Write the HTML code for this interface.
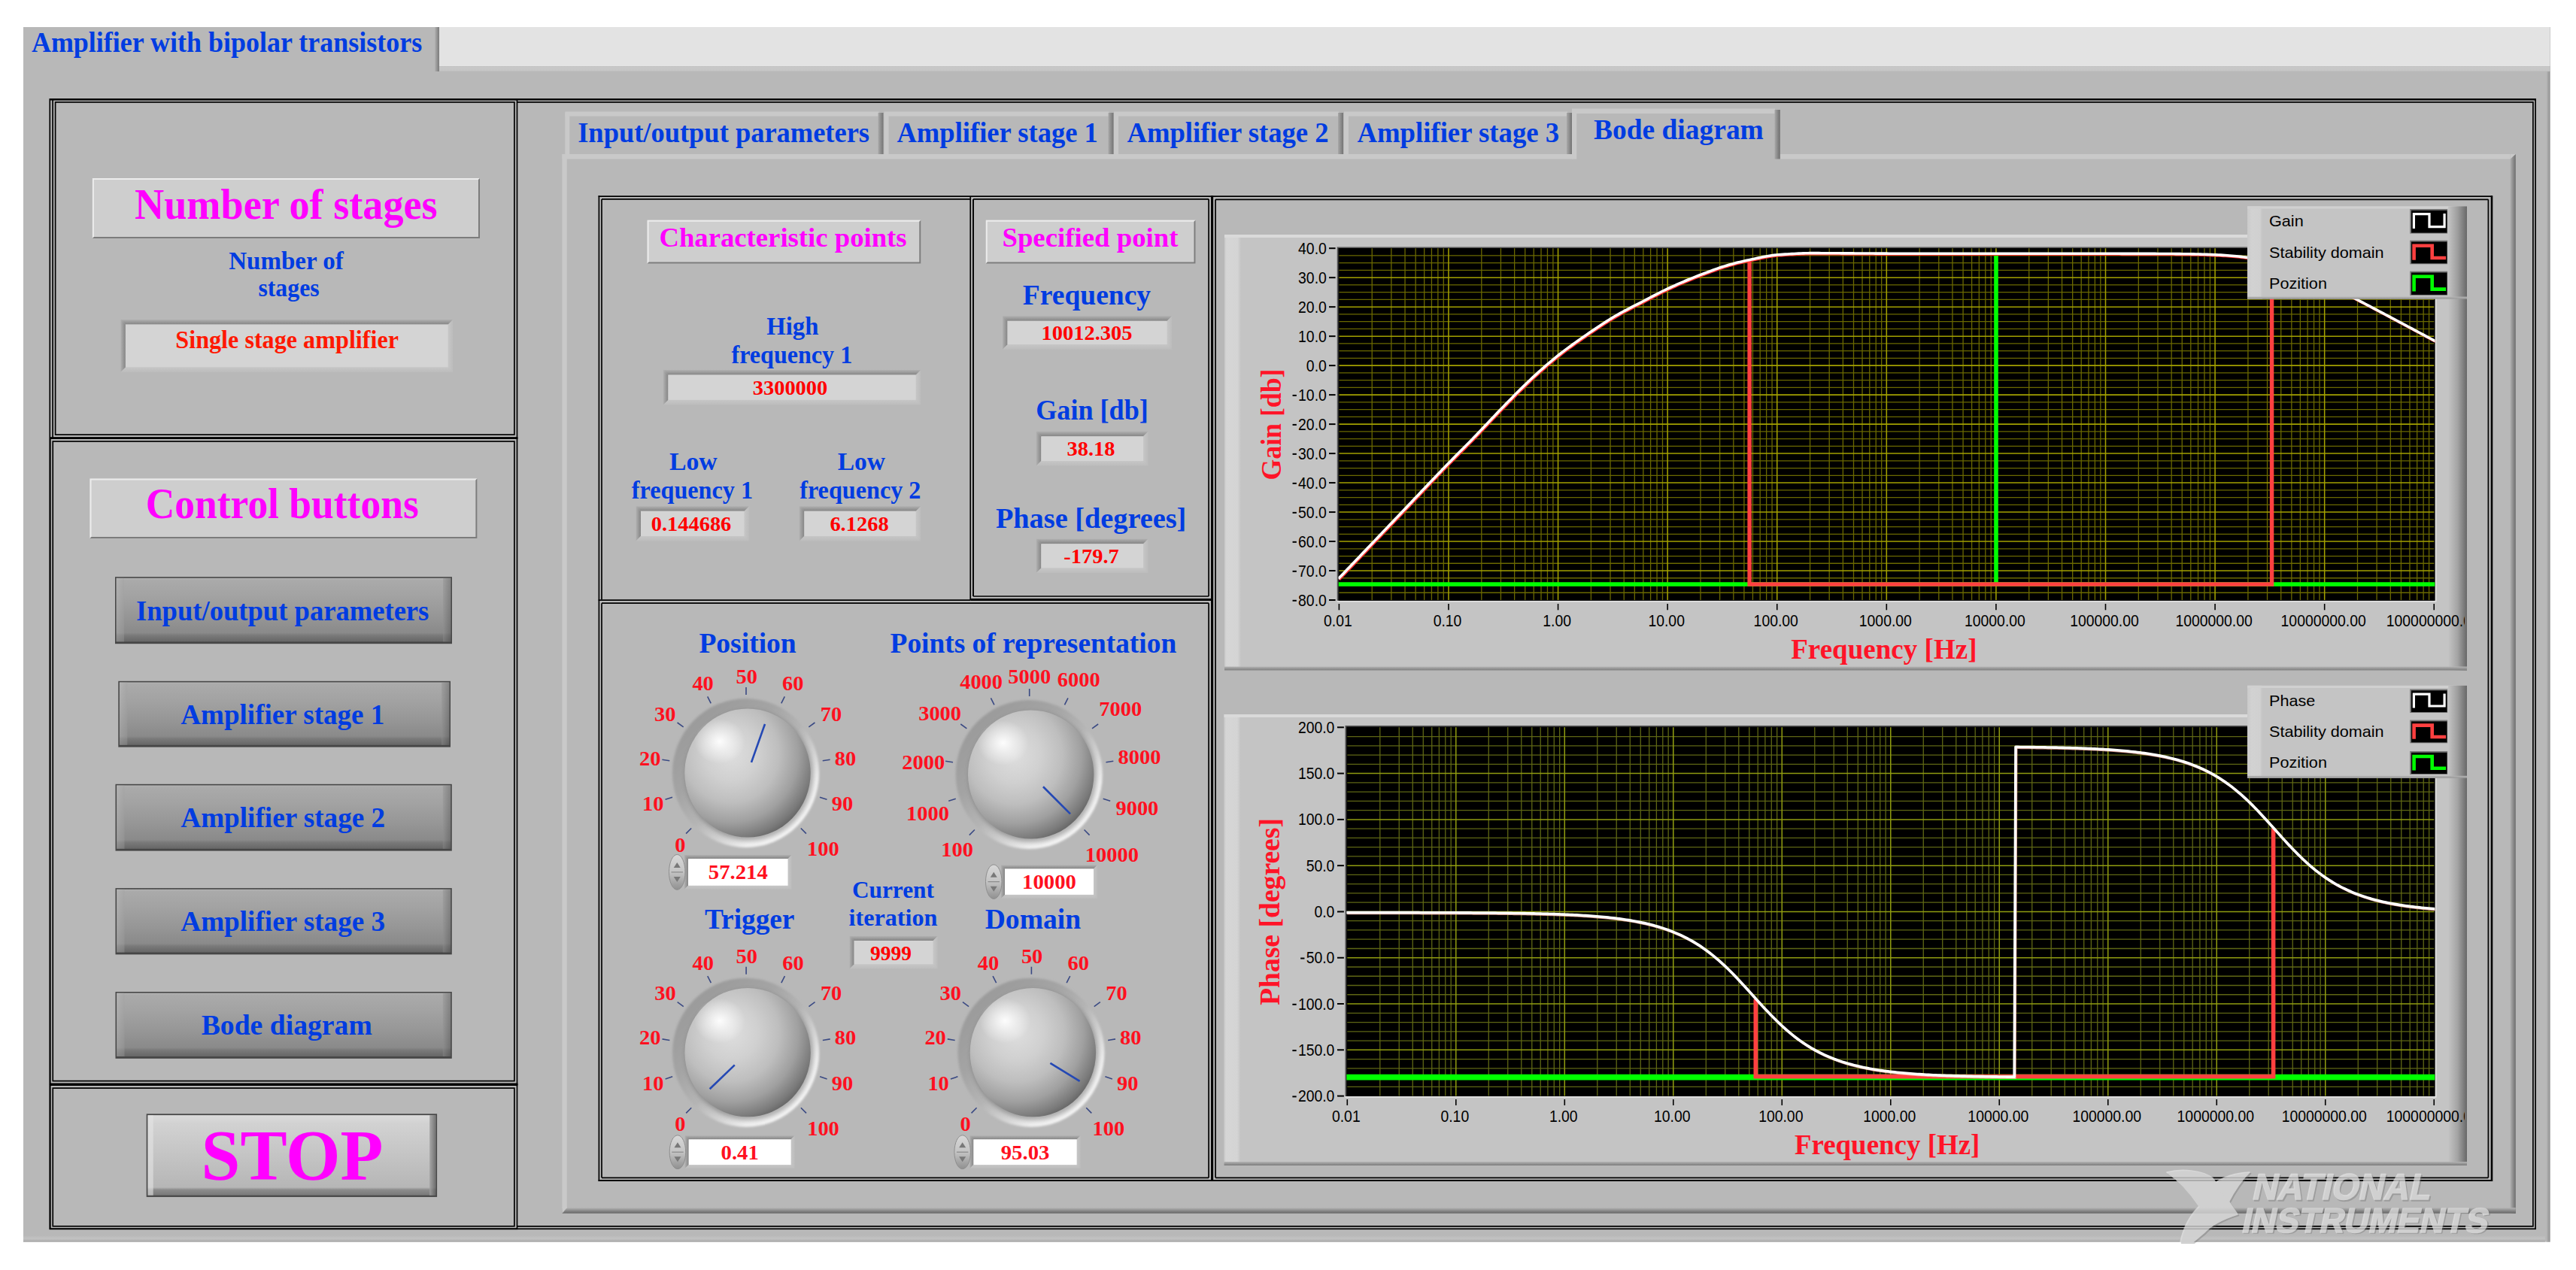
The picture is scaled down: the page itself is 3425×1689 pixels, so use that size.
<!DOCTYPE html>
<html><head><meta charset="utf-8"><title>Amplifier with bipolar transistors</title>
<style>html,body{margin:0;padding:0;background:#fff;}svg{display:block}text{white-space:pre}</style></head>
<body><svg width="3425" height="1689" viewBox="0 0 3425 1689">
<defs><linearGradient id="g1" x1="0" y1="0" x2="1" y2="0"><stop offset="0" stop-color="#b8b8b8"/><stop offset="1" stop-color="#909090"/></linearGradient><linearGradient id="g2" x1="0" y1="0" x2="0" y2="1"><stop offset="0" stop-color="#b8b8b8"/><stop offset="0.5" stop-color="#c2c2c2"/><stop offset="1" stop-color="#a8a8a8"/></linearGradient><linearGradient id="g3" x1="0" y1="0" x2="0" y2="1"><stop offset="0" stop-color="#bebebe"/><stop offset="0.2" stop-color="#c8c8c8"/><stop offset="0.8" stop-color="#c6c6c6"/><stop offset="1" stop-color="#bababa"/></linearGradient><linearGradient id="g4" x1="0" y1="0" x2="1" y2="0"><stop offset="0" stop-color="#b8b8b8"/><stop offset="0.6" stop-color="#909090"/><stop offset="1" stop-color="#7c7c7c"/></linearGradient><linearGradient id="g5" x1="0" y1="0" x2="0" y2="1"><stop offset="0" stop-color="#b0b0b0"/><stop offset="1" stop-color="#858585"/></linearGradient><linearGradient id="g6" x1="0" y1="0" x2="1" y2="0"><stop offset="0" stop-color="#b0b0b0"/><stop offset="1" stop-color="#858585"/></linearGradient><linearGradient id="g7" x1="0" y1="0" x2="0" y2="1"><stop offset="0" stop-color="#c6c6c6"/><stop offset="1" stop-color="#bcbcbc"/></linearGradient><linearGradient id="g8" x1="0" y1="0" x2="1" y2="0"><stop offset="0" stop-color="#c6c6c6"/><stop offset="1" stop-color="#bcbcbc"/></linearGradient><linearGradient id="g9" x1="0" y1="0" x2="0" y2="1"><stop offset="0" stop-color="#b2b2b2"/><stop offset="0.035" stop-color="#aaaaaa"/><stop offset="0.3" stop-color="#a2a2a2"/><stop offset="0.6" stop-color="#969696"/><stop offset="0.86" stop-color="#8a8a8a"/><stop offset="0.9" stop-color="#7a7a7a"/><stop offset="1" stop-color="#666666"/></linearGradient><linearGradient id="g10" x1="0" y1="0" x2="1" y2="0"><stop offset="0" stop-color="#c0c0c0"/><stop offset="1" stop-color="#a0a0a0"/></linearGradient><linearGradient id="g11" x1="0" y1="0" x2="1" y2="0"><stop offset="0" stop-color="#909090"/><stop offset="1" stop-color="#4a4a4a"/></linearGradient><linearGradient id="g12" x1="0" y1="0" x2="0" y2="1"><stop offset="0" stop-color="#b2b2b2"/><stop offset="0.035" stop-color="#aaaaaa"/><stop offset="0.3" stop-color="#a2a2a2"/><stop offset="0.6" stop-color="#969696"/><stop offset="0.86" stop-color="#8a8a8a"/><stop offset="0.9" stop-color="#7a7a7a"/><stop offset="1" stop-color="#666666"/></linearGradient><linearGradient id="g13" x1="0" y1="0" x2="1" y2="0"><stop offset="0" stop-color="#c0c0c0"/><stop offset="1" stop-color="#a0a0a0"/></linearGradient><linearGradient id="g14" x1="0" y1="0" x2="1" y2="0"><stop offset="0" stop-color="#909090"/><stop offset="1" stop-color="#4a4a4a"/></linearGradient><linearGradient id="g15" x1="0" y1="0" x2="0" y2="1"><stop offset="0" stop-color="#b2b2b2"/><stop offset="0.035" stop-color="#aaaaaa"/><stop offset="0.3" stop-color="#a2a2a2"/><stop offset="0.6" stop-color="#969696"/><stop offset="0.86" stop-color="#8a8a8a"/><stop offset="0.9" stop-color="#7a7a7a"/><stop offset="1" stop-color="#666666"/></linearGradient><linearGradient id="g16" x1="0" y1="0" x2="1" y2="0"><stop offset="0" stop-color="#c0c0c0"/><stop offset="1" stop-color="#a0a0a0"/></linearGradient><linearGradient id="g17" x1="0" y1="0" x2="1" y2="0"><stop offset="0" stop-color="#909090"/><stop offset="1" stop-color="#4a4a4a"/></linearGradient><linearGradient id="g18" x1="0" y1="0" x2="0" y2="1"><stop offset="0" stop-color="#b2b2b2"/><stop offset="0.035" stop-color="#aaaaaa"/><stop offset="0.3" stop-color="#a2a2a2"/><stop offset="0.6" stop-color="#969696"/><stop offset="0.86" stop-color="#8a8a8a"/><stop offset="0.9" stop-color="#7a7a7a"/><stop offset="1" stop-color="#666666"/></linearGradient><linearGradient id="g19" x1="0" y1="0" x2="1" y2="0"><stop offset="0" stop-color="#c0c0c0"/><stop offset="1" stop-color="#a0a0a0"/></linearGradient><linearGradient id="g20" x1="0" y1="0" x2="1" y2="0"><stop offset="0" stop-color="#909090"/><stop offset="1" stop-color="#4a4a4a"/></linearGradient><linearGradient id="g21" x1="0" y1="0" x2="0" y2="1"><stop offset="0" stop-color="#b2b2b2"/><stop offset="0.035" stop-color="#aaaaaa"/><stop offset="0.3" stop-color="#a2a2a2"/><stop offset="0.6" stop-color="#969696"/><stop offset="0.86" stop-color="#8a8a8a"/><stop offset="0.9" stop-color="#7a7a7a"/><stop offset="1" stop-color="#666666"/></linearGradient><linearGradient id="g22" x1="0" y1="0" x2="1" y2="0"><stop offset="0" stop-color="#c0c0c0"/><stop offset="1" stop-color="#a0a0a0"/></linearGradient><linearGradient id="g23" x1="0" y1="0" x2="1" y2="0"><stop offset="0" stop-color="#909090"/><stop offset="1" stop-color="#4a4a4a"/></linearGradient><linearGradient id="g24" x1="0" y1="0" x2="0" y2="1"><stop offset="0" stop-color="#dcdcdc"/><stop offset="0.1" stop-color="#d2d2d2"/><stop offset="0.5" stop-color="#c4c4c4"/><stop offset="0.9" stop-color="#b6b6b6"/><stop offset="0.93" stop-color="#8c8c8c"/><stop offset="1" stop-color="#787878"/></linearGradient><linearGradient id="g25" x1="0" y1="0" x2="1" y2="0"><stop offset="0" stop-color="#a0a0a0"/><stop offset="1" stop-color="#5c5c5c"/></linearGradient><linearGradient id="g26" x1="0" y1="0" x2="1" y2="0"><stop offset="0" stop-color="#b0b0b0"/><stop offset="1" stop-color="#6e6e6e"/></linearGradient><linearGradient id="g27" x1="0" y1="0" x2="0" y2="1"><stop offset="0" stop-color="#b4b4b4"/><stop offset="0.75" stop-color="#787878"/><stop offset="1" stop-color="#666666"/></linearGradient><linearGradient id="g28" x1="0" y1="0" x2="1" y2="0"><stop offset="0" stop-color="#a8a8a8"/><stop offset="1" stop-color="#747474"/></linearGradient><linearGradient id="g29" x1="0" y1="0" x2="1" y2="0"><stop offset="0" stop-color="#a8a8a8"/><stop offset="1" stop-color="#747474"/></linearGradient><linearGradient id="g30" x1="0" y1="0" x2="1" y2="0"><stop offset="0" stop-color="#a8a8a8"/><stop offset="1" stop-color="#747474"/></linearGradient><linearGradient id="g31" x1="0" y1="0" x2="1" y2="0"><stop offset="0" stop-color="#a8a8a8"/><stop offset="1" stop-color="#747474"/></linearGradient><linearGradient id="g32" x1="0" y1="0" x2="1" y2="0"><stop offset="0" stop-color="#a8a8a8"/><stop offset="1" stop-color="#6e6e6e"/></linearGradient><linearGradient id="g33" x1="0" y1="0" x2="0" y2="1"><stop offset="0" stop-color="#b0b0b0"/><stop offset="1" stop-color="#858585"/></linearGradient><linearGradient id="g34" x1="0" y1="0" x2="1" y2="0"><stop offset="0" stop-color="#b0b0b0"/><stop offset="1" stop-color="#858585"/></linearGradient><linearGradient id="g35" x1="0" y1="0" x2="0" y2="1"><stop offset="0" stop-color="#c6c6c6"/><stop offset="1" stop-color="#bcbcbc"/></linearGradient><linearGradient id="g36" x1="0" y1="0" x2="1" y2="0"><stop offset="0" stop-color="#c6c6c6"/><stop offset="1" stop-color="#bcbcbc"/></linearGradient><linearGradient id="g37" x1="0" y1="0" x2="0" y2="1"><stop offset="0" stop-color="#b0b0b0"/><stop offset="1" stop-color="#858585"/></linearGradient><linearGradient id="g38" x1="0" y1="0" x2="1" y2="0"><stop offset="0" stop-color="#b0b0b0"/><stop offset="1" stop-color="#858585"/></linearGradient><linearGradient id="g39" x1="0" y1="0" x2="0" y2="1"><stop offset="0" stop-color="#c6c6c6"/><stop offset="1" stop-color="#bcbcbc"/></linearGradient><linearGradient id="g40" x1="0" y1="0" x2="1" y2="0"><stop offset="0" stop-color="#c6c6c6"/><stop offset="1" stop-color="#bcbcbc"/></linearGradient><linearGradient id="g41" x1="0" y1="0" x2="0" y2="1"><stop offset="0" stop-color="#b0b0b0"/><stop offset="1" stop-color="#858585"/></linearGradient><linearGradient id="g42" x1="0" y1="0" x2="1" y2="0"><stop offset="0" stop-color="#b0b0b0"/><stop offset="1" stop-color="#858585"/></linearGradient><linearGradient id="g43" x1="0" y1="0" x2="0" y2="1"><stop offset="0" stop-color="#c6c6c6"/><stop offset="1" stop-color="#bcbcbc"/></linearGradient><linearGradient id="g44" x1="0" y1="0" x2="1" y2="0"><stop offset="0" stop-color="#c6c6c6"/><stop offset="1" stop-color="#bcbcbc"/></linearGradient><linearGradient id="g45" x1="0" y1="0" x2="0" y2="1"><stop offset="0" stop-color="#b0b0b0"/><stop offset="1" stop-color="#858585"/></linearGradient><linearGradient id="g46" x1="0" y1="0" x2="1" y2="0"><stop offset="0" stop-color="#b0b0b0"/><stop offset="1" stop-color="#858585"/></linearGradient><linearGradient id="g47" x1="0" y1="0" x2="0" y2="1"><stop offset="0" stop-color="#c6c6c6"/><stop offset="1" stop-color="#bcbcbc"/></linearGradient><linearGradient id="g48" x1="0" y1="0" x2="1" y2="0"><stop offset="0" stop-color="#c6c6c6"/><stop offset="1" stop-color="#bcbcbc"/></linearGradient><linearGradient id="g49" x1="0" y1="0" x2="0" y2="1"><stop offset="0" stop-color="#b0b0b0"/><stop offset="1" stop-color="#858585"/></linearGradient><linearGradient id="g50" x1="0" y1="0" x2="1" y2="0"><stop offset="0" stop-color="#b0b0b0"/><stop offset="1" stop-color="#858585"/></linearGradient><linearGradient id="g51" x1="0" y1="0" x2="0" y2="1"><stop offset="0" stop-color="#c6c6c6"/><stop offset="1" stop-color="#bcbcbc"/></linearGradient><linearGradient id="g52" x1="0" y1="0" x2="1" y2="0"><stop offset="0" stop-color="#c6c6c6"/><stop offset="1" stop-color="#bcbcbc"/></linearGradient><linearGradient id="g53" x1="0" y1="0" x2="0" y2="1"><stop offset="0" stop-color="#b0b0b0"/><stop offset="1" stop-color="#858585"/></linearGradient><linearGradient id="g54" x1="0" y1="0" x2="1" y2="0"><stop offset="0" stop-color="#b0b0b0"/><stop offset="1" stop-color="#858585"/></linearGradient><linearGradient id="g55" x1="0" y1="0" x2="0" y2="1"><stop offset="0" stop-color="#c6c6c6"/><stop offset="1" stop-color="#bcbcbc"/></linearGradient><linearGradient id="g56" x1="0" y1="0" x2="1" y2="0"><stop offset="0" stop-color="#c6c6c6"/><stop offset="1" stop-color="#bcbcbc"/></linearGradient><linearGradient id="g57" x1="0" y1="0" x2="0" y2="1"><stop offset="0" stop-color="#b0b0b0"/><stop offset="1" stop-color="#858585"/></linearGradient><linearGradient id="g58" x1="0" y1="0" x2="1" y2="0"><stop offset="0" stop-color="#b0b0b0"/><stop offset="1" stop-color="#858585"/></linearGradient><linearGradient id="g59" x1="0" y1="0" x2="0" y2="1"><stop offset="0" stop-color="#c6c6c6"/><stop offset="1" stop-color="#bcbcbc"/></linearGradient><linearGradient id="g60" x1="0" y1="0" x2="1" y2="0"><stop offset="0" stop-color="#c6c6c6"/><stop offset="1" stop-color="#bcbcbc"/></linearGradient><filter id="blur1" x="-10%" y="-10%" width="120%" height="120%"><feGaussianBlur stdDeviation="1.6"/></filter><filter id="blur3" x="-20%" y="-20%" width="140%" height="140%"><feGaussianBlur stdDeviation="3"/></filter><linearGradient id="g61" x1="0.15" y1="0.12" x2="0.85" y2="0.88"><stop offset="0" stop-color="#9a9a9a"/><stop offset="0.3" stop-color="#a4a4a4"/><stop offset="0.52" stop-color="#b4b4b4"/><stop offset="0.7" stop-color="#d2d2d2"/><stop offset="0.85" stop-color="#f0f0f0"/><stop offset="1" stop-color="#fafafa"/></linearGradient><radialGradient id="g62" cx="0.37" cy="0.35" r="0.76"><stop offset="0" stop-color="#dedede"/><stop offset="0.28" stop-color="#d0d0d0"/><stop offset="0.5" stop-color="#bebebe"/><stop offset="0.7" stop-color="#a0a0a0"/><stop offset="0.86" stop-color="#7a7a7a"/><stop offset="1" stop-color="#4e4e4e"/></radialGradient><radialGradient id="g63" cx="0.5" cy="0.5" r="0.5"><stop offset="0" stop-color="#ffffff"/><stop offset="0.4" stop-color="#f4f4f4"/><stop offset="1" stop-color="#e0e0e0"/></radialGradient><radialGradient id="hl"><stop offset="0" stop-color="#fff" stop-opacity="0.95"/><stop offset="0.45" stop-color="#fff" stop-opacity="0.5"/><stop offset="1" stop-color="#fff" stop-opacity="0"/></radialGradient><linearGradient id="g64" x1="0" y1="0" x2="0" y2="1"><stop offset="0" stop-color="#b0b0b0"/><stop offset="1" stop-color="#858585"/></linearGradient><linearGradient id="g65" x1="0" y1="0" x2="1" y2="0"><stop offset="0" stop-color="#b0b0b0"/><stop offset="1" stop-color="#858585"/></linearGradient><linearGradient id="g66" x1="0" y1="0" x2="0" y2="1"><stop offset="0" stop-color="#c6c6c6"/><stop offset="1" stop-color="#bcbcbc"/></linearGradient><linearGradient id="g67" x1="0" y1="0" x2="1" y2="0"><stop offset="0" stop-color="#c6c6c6"/><stop offset="1" stop-color="#bcbcbc"/></linearGradient><linearGradient id="g68" x1="0" y1="0" x2="0" y2="1"><stop offset="0" stop-color="#d8d8d8"/><stop offset="0.5" stop-color="#c4c4c4"/><stop offset="1" stop-color="#909090"/></linearGradient><linearGradient id="g69" x1="0" y1="0" x2="0" y2="1"><stop offset="0" stop-color="#b0b0b0"/><stop offset="1" stop-color="#858585"/></linearGradient><linearGradient id="g70" x1="0" y1="0" x2="1" y2="0"><stop offset="0" stop-color="#b0b0b0"/><stop offset="1" stop-color="#858585"/></linearGradient><linearGradient id="g71" x1="0" y1="0" x2="0" y2="1"><stop offset="0" stop-color="#c6c6c6"/><stop offset="1" stop-color="#bcbcbc"/></linearGradient><linearGradient id="g72" x1="0" y1="0" x2="1" y2="0"><stop offset="0" stop-color="#c6c6c6"/><stop offset="1" stop-color="#bcbcbc"/></linearGradient><linearGradient id="g73" x1="0" y1="0" x2="0" y2="1"><stop offset="0" stop-color="#d8d8d8"/><stop offset="0.5" stop-color="#c4c4c4"/><stop offset="1" stop-color="#909090"/></linearGradient><linearGradient id="g74" x1="0" y1="0" x2="0" y2="1"><stop offset="0" stop-color="#b0b0b0"/><stop offset="1" stop-color="#858585"/></linearGradient><linearGradient id="g75" x1="0" y1="0" x2="1" y2="0"><stop offset="0" stop-color="#b0b0b0"/><stop offset="1" stop-color="#858585"/></linearGradient><linearGradient id="g76" x1="0" y1="0" x2="0" y2="1"><stop offset="0" stop-color="#c6c6c6"/><stop offset="1" stop-color="#bcbcbc"/></linearGradient><linearGradient id="g77" x1="0" y1="0" x2="1" y2="0"><stop offset="0" stop-color="#c6c6c6"/><stop offset="1" stop-color="#bcbcbc"/></linearGradient><linearGradient id="g78" x1="0" y1="0" x2="0" y2="1"><stop offset="0" stop-color="#d8d8d8"/><stop offset="0.5" stop-color="#c4c4c4"/><stop offset="1" stop-color="#909090"/></linearGradient><linearGradient id="g79" x1="0" y1="0" x2="0" y2="1"><stop offset="0" stop-color="#b0b0b0"/><stop offset="1" stop-color="#858585"/></linearGradient><linearGradient id="g80" x1="0" y1="0" x2="1" y2="0"><stop offset="0" stop-color="#b0b0b0"/><stop offset="1" stop-color="#858585"/></linearGradient><linearGradient id="g81" x1="0" y1="0" x2="0" y2="1"><stop offset="0" stop-color="#c6c6c6"/><stop offset="1" stop-color="#bcbcbc"/></linearGradient><linearGradient id="g82" x1="0" y1="0" x2="1" y2="0"><stop offset="0" stop-color="#c6c6c6"/><stop offset="1" stop-color="#bcbcbc"/></linearGradient><linearGradient id="g83" x1="0" y1="0" x2="0" y2="1"><stop offset="0" stop-color="#d8d8d8"/><stop offset="0.5" stop-color="#c4c4c4"/><stop offset="1" stop-color="#909090"/></linearGradient><linearGradient id="g84" x1="0" y1="0" x2="1" y2="0"><stop offset="0" stop-color="#c8c8c8"/><stop offset="0.12" stop-color="#d6d6d6"/><stop offset="0.8" stop-color="#d4d4d4"/><stop offset="1" stop-color="#c4c4c4"/></linearGradient><linearGradient id="g85" x1="0" y1="0" x2="1" y2="0"><stop offset="0" stop-color="#c4c4c4"/><stop offset="0.5" stop-color="#a4a4a4"/><stop offset="1" stop-color="#686868"/></linearGradient><linearGradient id="g86" x1="0" y1="0" x2="0" y2="1"><stop offset="0" stop-color="#b4b4b4"/><stop offset="1" stop-color="#7c7c7c"/></linearGradient><clipPath id="c87"><rect x="1779.5" y="330.0" width="1458.0" height="468.79999999999995"/></clipPath><clipPath id="c88"><rect x="1600" y="803.1" width="1677" height="50"/></clipPath><linearGradient id="g89" x1="0" y1="0" x2="1" y2="0"><stop offset="0" stop-color="#cacaca"/><stop offset="0.3" stop-color="#d2d2d2"/><stop offset="0.85" stop-color="#d0d0d0"/><stop offset="1" stop-color="#c4c4c4"/></linearGradient><linearGradient id="g90" x1="0" y1="0" x2="1" y2="0"><stop offset="0" stop-color="#c4c4c4"/><stop offset="0.5" stop-color="#9e9e9e"/><stop offset="1" stop-color="#686868"/></linearGradient><linearGradient id="g91" x1="0" y1="0" x2="0" y2="1"><stop offset="0" stop-color="#b4b4b4"/><stop offset="1" stop-color="#989898"/></linearGradient><linearGradient id="g92" x1="0" y1="0" x2="1" y2="0"><stop offset="0" stop-color="#c8c8c8"/><stop offset="0.12" stop-color="#d6d6d6"/><stop offset="0.8" stop-color="#d4d4d4"/><stop offset="1" stop-color="#c4c4c4"/></linearGradient><linearGradient id="g93" x1="0" y1="0" x2="1" y2="0"><stop offset="0" stop-color="#c4c4c4"/><stop offset="0.5" stop-color="#a4a4a4"/><stop offset="1" stop-color="#686868"/></linearGradient><linearGradient id="g94" x1="0" y1="0" x2="0" y2="1"><stop offset="0" stop-color="#b4b4b4"/><stop offset="1" stop-color="#7c7c7c"/></linearGradient><clipPath id="c95"><rect x="1790.2" y="966.5" width="1447.3" height="491.5"/></clipPath><clipPath id="c96"><rect x="1600" y="1461.9" width="1677" height="50"/></clipPath><linearGradient id="g97" x1="0" y1="0" x2="1" y2="0"><stop offset="0" stop-color="#cacaca"/><stop offset="0.3" stop-color="#d2d2d2"/><stop offset="0.85" stop-color="#d0d0d0"/><stop offset="1" stop-color="#c4c4c4"/></linearGradient><linearGradient id="g98" x1="0" y1="0" x2="1" y2="0"><stop offset="0" stop-color="#c4c4c4"/><stop offset="0.5" stop-color="#9e9e9e"/><stop offset="1" stop-color="#686868"/></linearGradient><linearGradient id="g99" x1="0" y1="0" x2="0" y2="1"><stop offset="0" stop-color="#b4b4b4"/><stop offset="1" stop-color="#989898"/></linearGradient></defs>
<rect width="3425" height="1689" fill="#fff"/>
<rect x="31" y="36" width="3359.5" height="1615.6" fill="#b8b8b8" />
<rect x="3385.5" y="36" width="5" height="1615.6" fill="url(#g1)" />
<rect x="31" y="1643" width="3353" height="8.6" fill="url(#g2)" />
<rect x="584" y="36" width="2806.5" height="52" fill="#e3e3e3" />
<rect x="584" y="88" width="2806.5" height="7.2" fill="url(#g3)" />
<rect x="577.5" y="36" width="6.5" height="59" fill="url(#g4)" />
<text x="41.93" y="68.75" font-family="Liberation Serif, serif" font-weight="bold" font-size="38.17" fill="#003ce1" textLength="519.22" lengthAdjust="spacingAndGlyphs" >Amplifier with bipolar transistors</text>
<rect x="66.3" y="131.9" width="3304.8" height="1502.4" fill="none" stroke="#000" stroke-width="1.7"/>
<line x1="66.3" y1="132.3" x2="3371.1" y2="132.3" stroke="#000" stroke-width="2.2" />
<rect x="70.1" y="132.3" width="617.4" height="450.3" fill="none" stroke="#000" stroke-width="1.7"/>
<rect x="73.6" y="135.9" width="610.3" height="442.2" fill="none" stroke="#000" stroke-width="1.7"/>
<rect x="66.75" y="582.6" width="620.75" height="859.6" fill="none" stroke="#000" stroke-width="1.7"/>
<rect x="70.25" y="587" width="613.65" height="850.6" fill="none" stroke="#000" stroke-width="1.7"/>
<rect x="66.75" y="1442.2" width="620.75" height="192.1" fill="none" stroke="#000" stroke-width="1.7"/>
<rect x="70.25" y="1447.1" width="613.65" height="183.7" fill="none" stroke="#000" stroke-width="1.7"/>
<line x1="66" y1="582.6" x2="688.3" y2="582.6" stroke="#000" stroke-width="2.8" />
<line x1="66" y1="1442.2" x2="688.3" y2="1442.2" stroke="#000" stroke-width="3.6" />
<polyline points="687.5,135.9 3367.9,135.9 3367.9,1630.8 687.5,1630.8" fill="none" stroke="#000" stroke-width="1.7"/>
<rect x="122.9" y="237" width="515.1" height="80" fill="#cecece" />
<polygon points="122.9,237 638,237 636,239 124.9,239 124.9,315 122.9,317" fill="#ececec" />
<polygon points="638,317 122.9,317 124.9,315 636,315 636,239 638,237" fill="#7c7c7c" />
<text x="179.03" y="290.6" font-family="Liberation Serif, serif" font-weight="bold" font-size="57.71" fill="#ff00ff" textLength="402.7" lengthAdjust="spacingAndGlyphs" >Number of stages</text>
<text x="304.19" y="357.6" font-family="Liberation Serif, serif" font-weight="bold" font-size="33.89" fill="#003ce1" textLength="152.63" lengthAdjust="spacingAndGlyphs" >Number of</text>
<text x="343.39" y="393.5" font-family="Liberation Serif, serif" font-weight="bold" font-size="33.89" fill="#003ce1" textLength="81.33" lengthAdjust="spacingAndGlyphs" >stages</text>
<polygon points="160.4,425 602.3,425 595.8,431.5 166.9,431.5" fill="url(#g5)" />
<polygon points="160.4,425 166.9,431.5 166.9,488.5 160.4,495" fill="url(#g6)" />
<polygon points="160.4,495 166.9,488.5 595.8,488.5 602.3,495" fill="url(#g7)" />
<polygon points="602.3,425 602.3,495 595.8,488.5 595.8,431.5" fill="url(#g8)" />
<rect x="166.9" y="431.5" width="428.9" height="57" fill="#d4d4d4" />
<text x="233.3" y="462.9" font-family="Liberation Serif, serif" font-weight="bold" font-size="33.28" fill="#ff1800" textLength="296.7" lengthAdjust="spacingAndGlyphs" >Single stage amplifier</text>
<rect x="119.5" y="636.5" width="514.9" height="79.4" fill="#cecece" />
<polygon points="119.5,636.5 634.4,636.5 632.4,638.5 121.5,638.5 121.5,713.9 119.5,715.9" fill="#ececec" />
<polygon points="634.4,715.9 119.5,715.9 121.5,713.9 632.4,713.9 632.4,638.5 634.4,636.5" fill="#7c7c7c" />
<text x="193.74" y="689.4" font-family="Liberation Serif, serif" font-weight="bold" font-size="57.1" fill="#ff00ff" textLength="362.97" lengthAdjust="spacingAndGlyphs" >Control buttons</text>
<rect x="153" y="767.2" width="448" height="89" fill="#464646" />
<rect x="154.6" y="768.8" width="444.8" height="84.6" fill="url(#g9)" />
<rect x="154.6" y="768.8" width="10.4" height="84.6" fill="url(#g10)" opacity="0.35"/>
<rect x="589" y="768.8" width="10.4" height="84.6" fill="url(#g11)" opacity="0.4"/>
<text x="181.02" y="824.6" font-family="Liberation Serif, serif" font-weight="bold" font-size="38.93" fill="#003ce1" textLength="389.35" lengthAdjust="spacingAndGlyphs" >Input/output parameters</text>
<rect x="157.3" y="905.8" width="441.7" height="87.8" fill="#464646" />
<rect x="158.9" y="907.4" width="438.5" height="83.4" fill="url(#g12)" />
<rect x="158.9" y="907.4" width="10.4" height="83.4" fill="url(#g13)" opacity="0.35"/>
<rect x="587" y="907.4" width="10.4" height="83.4" fill="url(#g14)" opacity="0.4"/>
<text x="240.32" y="962.5" font-family="Liberation Serif, serif" font-weight="bold" font-size="38.93" fill="#003ce1" textLength="271.05" lengthAdjust="spacingAndGlyphs" >Amplifier stage 1</text>
<rect x="153.5" y="1042.8" width="447.3" height="88.8" fill="#464646" />
<rect x="155.1" y="1044.4" width="444.1" height="84.4" fill="url(#g15)" />
<rect x="155.1" y="1044.4" width="10.4" height="84.4" fill="url(#g16)" opacity="0.35"/>
<rect x="588.8" y="1044.4" width="10.4" height="84.4" fill="url(#g17)" opacity="0.4"/>
<text x="240.32" y="1100" font-family="Liberation Serif, serif" font-weight="bold" font-size="38.93" fill="#003ce1" textLength="271.85" lengthAdjust="spacingAndGlyphs" >Amplifier stage 2</text>
<rect x="153.5" y="1181.1" width="447.3" height="88.3" fill="#464646" />
<rect x="155.1" y="1182.7" width="444.1" height="83.9" fill="url(#g18)" />
<rect x="155.1" y="1182.7" width="10.4" height="83.9" fill="url(#g19)" opacity="0.35"/>
<rect x="588.8" y="1182.7" width="10.4" height="83.9" fill="url(#g20)" opacity="0.4"/>
<text x="240.32" y="1237.8" font-family="Liberation Serif, serif" font-weight="bold" font-size="38.93" fill="#003ce1" textLength="271.85" lengthAdjust="spacingAndGlyphs" >Amplifier stage 3</text>
<rect x="153.5" y="1319" width="447.3" height="88.8" fill="#464646" />
<rect x="155.1" y="1320.6" width="444.1" height="84.4" fill="url(#g21)" />
<rect x="155.1" y="1320.6" width="10.4" height="84.4" fill="url(#g22)" opacity="0.35"/>
<rect x="588.8" y="1320.6" width="10.4" height="84.4" fill="url(#g23)" opacity="0.4"/>
<text x="267.72" y="1375.7" font-family="Liberation Serif, serif" font-weight="bold" font-size="38.93" fill="#003ce1" textLength="227.05" lengthAdjust="spacingAndGlyphs" >Bode diagram</text>
<rect x="194.7" y="1481.3" width="386.4" height="110.6" fill="#484848" />
<rect x="196.5" y="1483.1" width="382.8" height="106.6" fill="url(#g24)" />
<rect x="196.5" y="1483.1" width="7.2" height="106.6" fill="#e4e4e4" opacity="0.6"/>
<rect x="571.1" y="1483.1" width="8.2" height="106.6" fill="url(#g25)" opacity="0.8"/>
<text x="267.62" y="1569.4" font-family="Liberation Serif, serif" font-weight="bold" font-size="95.88" fill="#ff00ff" textLength="241.99" lengthAdjust="spacingAndGlyphs" >STOP</text>
<rect x="747.5" y="205" width="1344.5" height="6.5" fill="#c9c9c9" />
<rect x="2364" y="205" width="980.8" height="6.5" fill="#c9c9c9" />
<rect x="747.5" y="205" width="6.3" height="1408.7" fill="#c9c9c9" />
<rect x="3337.5" y="205" width="7.3" height="1408.7" fill="url(#g26)" />
<rect x="747.5" y="1606.2" width="2597.3" height="7.5" fill="url(#g27)" />
<polygon points="747.5,1613.7 753.8,1606.2 753.8,1604.7 747.5,1604.7" fill="#c9c9c9" />
<polygon points="3344.8,205 3337.5,211.5 3337.5,205" fill="#c9c9c9" />
<rect x="751.3" y="148.5" width="417.2" height="6" fill="#c9c9c9" />
<rect x="751.3" y="150" width="6" height="55" fill="#c9c9c9" />
<rect x="1167.5" y="150" width="7" height="55" fill="url(#g28)" />
<text x="768.18" y="188.6" font-family="Liberation Serif, serif" font-weight="bold" font-size="37.71" fill="#003ce1" textLength="387.85" lengthAdjust="spacingAndGlyphs" >Input/output parameters</text>
<rect x="1175.5" y="148.5" width="299" height="6" fill="#c9c9c9" />
<rect x="1175.5" y="150" width="6" height="55" fill="#c9c9c9" />
<rect x="1473.5" y="150" width="7" height="55" fill="url(#g29)" />
<text x="1192.43" y="188.6" font-family="Liberation Serif, serif" font-weight="bold" font-size="37.71" fill="#003ce1" textLength="267.45" lengthAdjust="spacingAndGlyphs" >Amplifier stage 1</text>
<rect x="1481" y="148.5" width="299" height="6" fill="#c9c9c9" />
<rect x="1481" y="150" width="6" height="55" fill="#c9c9c9" />
<rect x="1779" y="150" width="7" height="55" fill="url(#g30)" />
<text x="1498.43" y="188.6" font-family="Liberation Serif, serif" font-weight="bold" font-size="37.71" fill="#003ce1" textLength="268.2" lengthAdjust="spacingAndGlyphs" >Amplifier stage 2</text>
<rect x="1787" y="148.5" width="297" height="6" fill="#c9c9c9" />
<rect x="1787" y="150" width="6" height="55" fill="#c9c9c9" />
<rect x="2083" y="150" width="7" height="55" fill="url(#g31)" />
<text x="1804.43" y="188.6" font-family="Liberation Serif, serif" font-weight="bold" font-size="37.71" fill="#003ce1" textLength="268.7" lengthAdjust="spacingAndGlyphs" >Amplifier stage 3</text>
<rect x="2090" y="144.5" width="270" height="6.5" fill="#c9c9c9" />
<rect x="2090" y="146" width="6.3" height="65.5" fill="#c9c9c9" />
<rect x="2359.5" y="146" width="7.3" height="65.5" fill="url(#g32)" />
<text x="2118.94" y="184.5" font-family="Liberation Serif, serif" font-weight="bold" font-size="37.1" fill="#003ce1" textLength="225.92" lengthAdjust="spacingAndGlyphs" >Bode diagram</text>
<line x1="796.4" y1="260.3" x2="796.4" y2="1570.9" stroke="#000" stroke-width="1.7" />
<line x1="800" y1="264.9" x2="800" y2="797.5" stroke="#000" stroke-width="1.7" />
<line x1="795.6" y1="261.1" x2="3313.8" y2="261.1" stroke="#000" stroke-width="1.9" />
<line x1="800" y1="264.9" x2="1290.25" y2="264.9" stroke="#000" stroke-width="1.7" />
<line x1="1290.25" y1="261.1" x2="1290.25" y2="798" stroke="#000" stroke-width="1.7" />
<line x1="1294" y1="264.9" x2="1294" y2="793" stroke="#000" stroke-width="1.9" />
<line x1="1294" y1="264.9" x2="1607.1" y2="264.9" stroke="#000" stroke-width="1.7" />
<line x1="1607.1" y1="264.9" x2="1607.1" y2="793" stroke="#000" stroke-width="1.7" />
<line x1="1294" y1="793" x2="1607.1" y2="793" stroke="#000" stroke-width="1.7" />
<line x1="1611.6" y1="260.3" x2="1611.6" y2="1570.9" stroke="#000" stroke-width="3.1" />
<line x1="1290.25" y1="797.5" x2="1611.6" y2="797.5" stroke="#000" stroke-width="2.8" />
<line x1="795.6" y1="798.2" x2="1290.25" y2="798.2" stroke="#000" stroke-width="1.7" />
<line x1="800" y1="802.2" x2="1607.1" y2="802.2" stroke="#000" stroke-width="1.7" />
<line x1="800" y1="802.2" x2="800" y2="1566.3" stroke="#000" stroke-width="1.7" />
<line x1="1607.1" y1="802.2" x2="1607.1" y2="1566.3" stroke="#000" stroke-width="1.7" />
<line x1="800" y1="1566.3" x2="1607.1" y2="1566.3" stroke="#000" stroke-width="1.7" />
<line x1="795.6" y1="1570" x2="3313.8" y2="1570" stroke="#000" stroke-width="1.8" />
<line x1="1616.1" y1="265.3" x2="3308.4" y2="265.3" stroke="#000" stroke-width="1.7" />
<line x1="1616.1" y1="265.3" x2="1616.1" y2="1566.3" stroke="#000" stroke-width="1.7" />
<line x1="3308.4" y1="265.3" x2="3308.4" y2="1566.3" stroke="#000" stroke-width="1.7" />
<line x1="1616.1" y1="1566.3" x2="3308.4" y2="1566.3" stroke="#000" stroke-width="1.7" />
<line x1="3313" y1="260.3" x2="3313" y2="1570.9" stroke="#000" stroke-width="2.6" />
<rect x="860.6" y="292.7" width="363.7" height="57.7" fill="#cecece" />
<polygon points="860.6,292.7 1224.3,292.7 1222.3,294.7 862.6,294.7 862.6,348.4 860.6,350.4" fill="#ececec" />
<polygon points="1224.3,350.4 860.6,350.4 862.6,348.4 1222.3,348.4 1222.3,294.7 1224.3,292.7" fill="#7c7c7c" />
<text x="876.45" y="328" font-family="Liberation Serif, serif" font-weight="bold" font-size="36.64" fill="#ff00ff" textLength="329.15" lengthAdjust="spacingAndGlyphs" >Characteristic points</text>
<rect x="1310.8" y="292.7" width="278.7" height="57.7" fill="#cecece" />
<polygon points="1310.8,292.7 1589.5,292.7 1587.5,294.7 1312.8,294.7 1312.8,348.4 1310.8,350.4" fill="#ececec" />
<polygon points="1589.5,350.4 1310.8,350.4 1312.8,348.4 1587.5,348.4 1587.5,294.7 1589.5,292.7" fill="#7c7c7c" />
<text x="1332.45" y="328" font-family="Liberation Serif, serif" font-weight="bold" font-size="36.64" fill="#ff00ff" textLength="234.05" lengthAdjust="spacingAndGlyphs" >Specified point</text>
<text x="1019.29" y="444.8" font-family="Liberation Serif, serif" font-weight="bold" font-size="33.89" fill="#003ce1" textLength="69.03" lengthAdjust="spacingAndGlyphs" >High</text>
<text x="972.49" y="482.6" font-family="Liberation Serif, serif" font-weight="bold" font-size="33.89" fill="#003ce1" textLength="160.73" lengthAdjust="spacingAndGlyphs" >frequency 1</text>
<polygon points="881.9,492 1224.3,492 1217.8,498.5 888.4,498.5" fill="url(#g33)" />
<polygon points="881.9,492 888.4,498.5 888.4,531.9 881.9,538.4" fill="url(#g34)" />
<polygon points="881.9,538.4 888.4,531.9 1217.8,531.9 1224.3,538.4" fill="url(#g35)" />
<polygon points="1224.3,492 1224.3,538.4 1217.8,531.9 1217.8,498.5" fill="url(#g36)" />
<rect x="888.4" y="498.5" width="329.4" height="33.4" fill="#d4d4d4" />
<text transform="translate(1050.5 525.3) scale(1.035 1)" font-family="Liberation Serif, serif" font-weight="bold" font-size="27.5" fill="#ff0000" text-anchor="middle" >3300000</text>
<text x="889.89" y="625.3" font-family="Liberation Serif, serif" font-weight="bold" font-size="33.89" fill="#003ce1" textLength="63.83" lengthAdjust="spacingAndGlyphs" >Low</text>
<text x="839.79" y="663" font-family="Liberation Serif, serif" font-weight="bold" font-size="33.89" fill="#003ce1" textLength="161.23" lengthAdjust="spacingAndGlyphs" >frequency 1</text>
<text x="1113.79" y="625.3" font-family="Liberation Serif, serif" font-weight="bold" font-size="33.89" fill="#003ce1" textLength="63.23" lengthAdjust="spacingAndGlyphs" >Low</text>
<text x="1063.19" y="663" font-family="Liberation Serif, serif" font-weight="bold" font-size="33.89" fill="#003ce1" textLength="161.23" lengthAdjust="spacingAndGlyphs" >frequency 2</text>
<polygon points="845.5,673.2 996.2,673.2 989.7,679.7 852,679.7" fill="url(#g37)" />
<polygon points="845.5,673.2 852,679.7 852,713 845.5,719.5" fill="url(#g38)" />
<polygon points="845.5,719.5 852,713 989.7,713 996.2,719.5" fill="url(#g39)" />
<polygon points="996.2,673.2 996.2,719.5 989.7,713 989.7,679.7" fill="url(#g40)" />
<rect x="852" y="679.7" width="137.7" height="33.3" fill="#d4d4d4" />
<text transform="translate(919 706.3) scale(1.035 1)" font-family="Liberation Serif, serif" font-weight="bold" font-size="27.5" fill="#ff0000" text-anchor="middle" >0.144686</text>
<polygon points="1062.8,673.2 1224.3,673.2 1217.8,679.7 1069.3,679.7" fill="url(#g41)" />
<polygon points="1062.8,673.2 1069.3,679.7 1069.3,713 1062.8,719.5" fill="url(#g42)" />
<polygon points="1062.8,719.5 1069.3,713 1217.8,713 1224.3,719.5" fill="url(#g43)" />
<polygon points="1224.3,673.2 1224.3,719.5 1217.8,713 1217.8,679.7" fill="url(#g44)" />
<rect x="1069.3" y="679.7" width="148.5" height="33.3" fill="#d4d4d4" />
<text transform="translate(1142.5 706.3) scale(1.035 1)" font-family="Liberation Serif, serif" font-weight="bold" font-size="27.5" fill="#ff0000" text-anchor="middle" >6.1268</text>
<text x="1359.83" y="404.7" font-family="Liberation Serif, serif" font-weight="bold" font-size="38.17" fill="#003ce1" textLength="170.32" lengthAdjust="spacingAndGlyphs" >Frequency</text>
<polygon points="1333,420.3 1558.3,420.3 1551.8,426.8 1339.5,426.8" fill="url(#g45)" />
<polygon points="1333,420.3 1339.5,426.8 1339.5,458.2 1333,464.7" fill="url(#g46)" />
<polygon points="1333,464.7 1339.5,458.2 1551.8,458.2 1558.3,464.7" fill="url(#g47)" />
<polygon points="1558.3,420.3 1558.3,464.7 1551.8,458.2 1551.8,426.8" fill="url(#g48)" />
<rect x="1339.5" y="426.8" width="212.3" height="31.4" fill="#d4d4d4" />
<text transform="translate(1445 452) scale(1.035 1)" font-family="Liberation Serif, serif" font-weight="bold" font-size="27.5" fill="#ff0000" text-anchor="middle" >10012.305</text>
<text x="1377.23" y="558.2" font-family="Liberation Serif, serif" font-weight="bold" font-size="38.17" fill="#003ce1" textLength="149.62" lengthAdjust="spacingAndGlyphs" >Gain [db]</text>
<polygon points="1377.8,573.8 1526.6,573.8 1520.1,580.3 1384.3,580.3" fill="url(#g49)" />
<polygon points="1377.8,573.8 1384.3,580.3 1384.3,613.1 1377.8,619.6" fill="url(#g50)" />
<polygon points="1377.8,619.6 1384.3,613.1 1520.1,613.1 1526.6,619.6" fill="url(#g51)" />
<polygon points="1526.6,573.8 1526.6,619.6 1520.1,613.1 1520.1,580.3" fill="url(#g52)" />
<rect x="1384.3" y="580.3" width="135.8" height="32.8" fill="#d4d4d4" />
<text transform="translate(1450.5 606.2) scale(1.035 1)" font-family="Liberation Serif, serif" font-weight="bold" font-size="27.5" fill="#ff0000" text-anchor="middle" >38.18</text>
<text x="1323.93" y="701.6" font-family="Liberation Serif, serif" font-weight="bold" font-size="38.17" fill="#003ce1" textLength="253.42" lengthAdjust="spacingAndGlyphs" >Phase [degrees]</text>
<polygon points="1377.8,716.7 1526.6,716.7 1520.1,723.2 1384.3,723.2" fill="url(#g53)" />
<polygon points="1377.8,716.7 1384.3,723.2 1384.3,755.5 1377.8,762" fill="url(#g54)" />
<polygon points="1377.8,762 1384.3,755.5 1520.1,755.5 1526.6,762" fill="url(#g55)" />
<polygon points="1526.6,716.7 1526.6,762 1520.1,755.5 1520.1,723.2" fill="url(#g56)" />
<rect x="1384.3" y="723.2" width="135.8" height="32.3" fill="#d4d4d4" />
<text transform="translate(1451 749.2) scale(1.035 1)" font-family="Liberation Serif, serif" font-weight="bold" font-size="27.5" fill="#ff0000" text-anchor="middle" >-179.7</text>
<text x="929.42" y="867.8" font-family="Liberation Serif, serif" font-weight="bold" font-size="38.93" fill="#003ce1" textLength="129.35" lengthAdjust="spacingAndGlyphs" >Position</text>
<text x="1183.62" y="867.8" font-family="Liberation Serif, serif" font-weight="bold" font-size="38.93" fill="#003ce1" textLength="380.55" lengthAdjust="spacingAndGlyphs" >Points of representation</text>
<text x="937.02" y="1235.4" font-family="Liberation Serif, serif" font-weight="bold" font-size="38.93" fill="#003ce1" textLength="119.35" lengthAdjust="spacingAndGlyphs" >Trigger</text>
<text x="1309.72" y="1235.4" font-family="Liberation Serif, serif" font-weight="bold" font-size="38.93" fill="#003ce1" textLength="127.45" lengthAdjust="spacingAndGlyphs" >Domain</text>
<text x="1132.93" y="1194.4" font-family="Liberation Serif, serif" font-weight="bold" font-size="31.45" fill="#003ce1" textLength="109.02" lengthAdjust="spacingAndGlyphs" >Current</text>
<text x="1128.53" y="1231.4" font-family="Liberation Serif, serif" font-weight="bold" font-size="31.45" fill="#003ce1" textLength="117.92" lengthAdjust="spacingAndGlyphs" >iteration</text>
<polygon points="1129.6,1245 1246.7,1245 1240.7,1251 1135.6,1251" fill="url(#g57)" />
<polygon points="1129.6,1245 1135.6,1251 1135.6,1282.5 1129.6,1288.5" fill="url(#g58)" />
<polygon points="1129.6,1288.5 1135.6,1282.5 1240.7,1282.5 1246.7,1288.5" fill="url(#g59)" />
<polygon points="1246.7,1245 1246.7,1288.5 1240.7,1282.5 1240.7,1251" fill="url(#g60)" />
<rect x="1135.6" y="1251" width="105.1" height="31.5" fill="#d4d4d4" />
<text x="1184.5" y="1276.6" font-family="Liberation Serif, serif" font-weight="bold" font-size="27.5" fill="#ff0000" text-anchor="middle" >9999</text>
<ellipse cx="991.5" cy="1028" rx="97.5" ry="99" fill="url(#g61)" filter="url(#blur1)"/>
<ellipse cx="996.5" cy="1031.5" rx="84.7" ry="86.6" fill="#505050" opacity="0.42" filter="url(#blur3)"/>
<ellipse cx="994" cy="1028" rx="83.7" ry="85.6" fill="url(#g62)"/>
<ellipse cx="957" cy="986" rx="34" ry="30" fill="url(#hl)"/>
<line x1="919.17" y1="1101.54" x2="912.1" y2="1108.61" stroke="#24367a" stroke-width="1.6" opacity="0.85"/>
<line x1="894.04" y1="1060.14" x2="884.53" y2="1063.23" stroke="#24367a" stroke-width="1.6" opacity="0.85"/>
<line x1="890.27" y1="1011.73" x2="880.39" y2="1010.17" stroke="#24367a" stroke-width="1.6" opacity="0.85"/>
<line x1="908.67" y1="966.87" x2="900.58" y2="960.99" stroke="#24367a" stroke-width="1.6" opacity="0.85"/>
<line x1="945.24" y1="935.34" x2="940.7" y2="926.43" stroke="#24367a" stroke-width="1.6" opacity="0.85"/>
<line x1="992" y1="924" x2="992" y2="914" stroke="#24367a" stroke-width="1.6" opacity="0.85"/>
<line x1="1038.76" y1="935.34" x2="1043.3" y2="926.43" stroke="#24367a" stroke-width="1.6" opacity="0.85"/>
<line x1="1075.33" y1="966.87" x2="1083.42" y2="960.99" stroke="#24367a" stroke-width="1.6" opacity="0.85"/>
<line x1="1093.73" y1="1011.73" x2="1103.61" y2="1010.17" stroke="#24367a" stroke-width="1.6" opacity="0.85"/>
<line x1="1089.96" y1="1060.14" x2="1099.47" y2="1063.23" stroke="#24367a" stroke-width="1.6" opacity="0.85"/>
<line x1="1064.83" y1="1101.54" x2="1071.9" y2="1108.61" stroke="#24367a" stroke-width="1.6" opacity="0.85"/>
<line x1="999" y1="1013.86" x2="1017.01" y2="962.95" stroke="#2448b4" stroke-width="2.6" />
<text transform="translate(992.7 909.2) scale(1.07 1)" font-family="Liberation Serif, serif" font-weight="bold" font-size="26.6" fill="#ff1020" text-anchor="middle" >50</text>
<text transform="translate(934.6 918) scale(1.07 1)" font-family="Liberation Serif, serif" font-weight="bold" font-size="26.6" fill="#ff1020" text-anchor="middle" >40</text>
<text transform="translate(1054.3 918) scale(1.07 1)" font-family="Liberation Serif, serif" font-weight="bold" font-size="26.6" fill="#ff1020" text-anchor="middle" >60</text>
<text transform="translate(884.3 958.7) scale(1.07 1)" font-family="Liberation Serif, serif" font-weight="bold" font-size="26.6" fill="#ff1020" text-anchor="middle" >30</text>
<text transform="translate(1105 958.7) scale(1.07 1)" font-family="Liberation Serif, serif" font-weight="bold" font-size="26.6" fill="#ff1020" text-anchor="middle" >70</text>
<text transform="translate(864.2 1017.6) scale(1.07 1)" font-family="Liberation Serif, serif" font-weight="bold" font-size="26.6" fill="#ff1020" text-anchor="middle" >20</text>
<text transform="translate(1123.9 1017.6) scale(1.07 1)" font-family="Liberation Serif, serif" font-weight="bold" font-size="26.6" fill="#ff1020" text-anchor="middle" >80</text>
<text transform="translate(868.2 1077.8) scale(1.07 1)" font-family="Liberation Serif, serif" font-weight="bold" font-size="26.6" fill="#ff1020" text-anchor="middle" >10</text>
<text transform="translate(1119.9 1077.8) scale(1.07 1)" font-family="Liberation Serif, serif" font-weight="bold" font-size="26.6" fill="#ff1020" text-anchor="middle" >90</text>
<text transform="translate(904.3 1132.7) scale(1.07 1)" font-family="Liberation Serif, serif" font-weight="bold" font-size="26.6" fill="#ff1020" text-anchor="middle" >0</text>
<text transform="translate(1094.4 1138) scale(1.07 1)" font-family="Liberation Serif, serif" font-weight="bold" font-size="26.6" fill="#ff1020" text-anchor="middle" >100</text>
<polygon points="910,1137 1052.6,1137 1047.6,1142 915,1142" fill="url(#g64)" />
<polygon points="910,1137 915,1142 915,1177.8 910,1182.8" fill="url(#g65)" />
<polygon points="910,1182.8 915,1177.8 1047.6,1177.8 1052.6,1182.8" fill="url(#g66)" />
<polygon points="1052.6,1137 1052.6,1182.8 1047.6,1177.8 1047.6,1142" fill="url(#g67)" />
<rect x="915" y="1142" width="132.6" height="35.8" fill="#ffffff" />
<text transform="translate(981.3 1169.2) scale(1.045 1)" font-family="Liberation Serif, serif" font-weight="bold" font-size="27.5" fill="#ff1020" text-anchor="middle" >57.214</text>
<ellipse cx="900.25" cy="1159.9" rx="10.75" ry="23.4" fill="url(#g68)" stroke="#8e8e8e" stroke-width="1"/>
<line x1="892.5" y1="1159.9" x2="908" y2="1159.9" stroke="#8a8a8a" stroke-width="1.2" />
<polygon points="900.25,1146.9 895.75,1153.9 904.75,1153.9" fill="#787878" />
<polygon points="900.25,1172.9 895.75,1165.9 904.75,1165.9" fill="#787878" />
<ellipse cx="1368.2" cy="1030" rx="97.5" ry="99" fill="url(#g61)" filter="url(#blur1)"/>
<ellipse cx="1373.2" cy="1033.5" rx="84.7" ry="86.6" fill="#505050" opacity="0.42" filter="url(#blur3)"/>
<ellipse cx="1370.7" cy="1030" rx="83.7" ry="85.6" fill="url(#g62)"/>
<ellipse cx="1333.7" cy="988" rx="34" ry="30" fill="url(#hl)"/>
<line x1="1295.87" y1="1103.54" x2="1288.8" y2="1110.61" stroke="#24367a" stroke-width="1.6" opacity="0.85"/>
<line x1="1270.74" y1="1062.14" x2="1261.23" y2="1065.23" stroke="#24367a" stroke-width="1.6" opacity="0.85"/>
<line x1="1266.97" y1="1013.73" x2="1257.09" y2="1012.17" stroke="#24367a" stroke-width="1.6" opacity="0.85"/>
<line x1="1285.37" y1="968.87" x2="1277.28" y2="962.99" stroke="#24367a" stroke-width="1.6" opacity="0.85"/>
<line x1="1321.94" y1="937.34" x2="1317.4" y2="928.43" stroke="#24367a" stroke-width="1.6" opacity="0.85"/>
<line x1="1368.7" y1="926" x2="1368.7" y2="916" stroke="#24367a" stroke-width="1.6" opacity="0.85"/>
<line x1="1415.46" y1="937.34" x2="1420" y2="928.43" stroke="#24367a" stroke-width="1.6" opacity="0.85"/>
<line x1="1452.03" y1="968.87" x2="1460.12" y2="962.99" stroke="#24367a" stroke-width="1.6" opacity="0.85"/>
<line x1="1470.43" y1="1013.73" x2="1480.31" y2="1012.17" stroke="#24367a" stroke-width="1.6" opacity="0.85"/>
<line x1="1466.66" y1="1062.14" x2="1476.17" y2="1065.23" stroke="#24367a" stroke-width="1.6" opacity="0.85"/>
<line x1="1441.53" y1="1103.54" x2="1448.6" y2="1110.61" stroke="#24367a" stroke-width="1.6" opacity="0.85"/>
<line x1="1386.96" y1="1046.26" x2="1423.03" y2="1082.33" stroke="#2448b4" stroke-width="2.6" />
<text transform="translate(1368.8 909.2) scale(1.07 1)" font-family="Liberation Serif, serif" font-weight="bold" font-size="26.6" fill="#ff1020" text-anchor="middle" >5000</text>
<text transform="translate(1304.6 915.5) scale(1.07 1)" font-family="Liberation Serif, serif" font-weight="bold" font-size="26.6" fill="#ff1020" text-anchor="middle" >4000</text>
<text transform="translate(1434.3 913.4) scale(1.07 1)" font-family="Liberation Serif, serif" font-weight="bold" font-size="26.6" fill="#ff1020" text-anchor="middle" >6000</text>
<text transform="translate(1249.6 958.3) scale(1.07 1)" font-family="Liberation Serif, serif" font-weight="bold" font-size="26.6" fill="#ff1020" text-anchor="middle" >3000</text>
<text transform="translate(1489.7 951.5) scale(1.07 1)" font-family="Liberation Serif, serif" font-weight="bold" font-size="26.6" fill="#ff1020" text-anchor="middle" >7000</text>
<text transform="translate(1227.7 1022.5) scale(1.07 1)" font-family="Liberation Serif, serif" font-weight="bold" font-size="26.6" fill="#ff1020" text-anchor="middle" >2000</text>
<text transform="translate(1515 1015.7) scale(1.07 1)" font-family="Liberation Serif, serif" font-weight="bold" font-size="26.6" fill="#ff1020" text-anchor="middle" >8000</text>
<text transform="translate(1233.5 1091.3) scale(1.07 1)" font-family="Liberation Serif, serif" font-weight="bold" font-size="26.6" fill="#ff1020" text-anchor="middle" >1000</text>
<text transform="translate(1511.9 1083.5) scale(1.07 1)" font-family="Liberation Serif, serif" font-weight="bold" font-size="26.6" fill="#ff1020" text-anchor="middle" >9000</text>
<text transform="translate(1272.6 1139.2) scale(1.07 1)" font-family="Liberation Serif, serif" font-weight="bold" font-size="26.6" fill="#ff1020" text-anchor="middle" >100</text>
<text transform="translate(1478.4 1146) scale(1.07 1)" font-family="Liberation Serif, serif" font-weight="bold" font-size="26.6" fill="#ff1020" text-anchor="middle" >10000</text>
<polygon points="1331,1150.4 1459,1150.4 1454,1155.4 1336,1155.4" fill="url(#g69)" />
<polygon points="1331,1150.4 1336,1155.4 1336,1189.9 1331,1194.9" fill="url(#g70)" />
<polygon points="1331,1194.9 1336,1189.9 1454,1189.9 1459,1194.9" fill="url(#g71)" />
<polygon points="1459,1150.4 1459,1194.9 1454,1189.9 1454,1155.4" fill="url(#g72)" />
<rect x="1336" y="1155.4" width="118" height="34.5" fill="#ffffff" />
<text transform="translate(1395 1181.95) scale(1.045 1)" font-family="Liberation Serif, serif" font-weight="bold" font-size="27.5" fill="#ff1020" text-anchor="middle" >10000</text>
<ellipse cx="1321.25" cy="1172.65" rx="10.75" ry="22.75" fill="url(#g73)" stroke="#8e8e8e" stroke-width="1"/>
<line x1="1313.5" y1="1172.65" x2="1329" y2="1172.65" stroke="#8a8a8a" stroke-width="1.2" />
<polygon points="1321.25,1159.65 1316.75,1166.65 1325.75,1166.65" fill="#787878" />
<polygon points="1321.25,1185.65 1316.75,1178.65 1325.75,1178.65" fill="#787878" />
<ellipse cx="991.6" cy="1399.7" rx="97.5" ry="99" fill="url(#g61)" filter="url(#blur1)"/>
<ellipse cx="996.6" cy="1403.2" rx="84.7" ry="86.6" fill="#505050" opacity="0.42" filter="url(#blur3)"/>
<ellipse cx="994.1" cy="1399.7" rx="83.7" ry="85.6" fill="url(#g62)"/>
<ellipse cx="957.1" cy="1357.7" rx="34" ry="30" fill="url(#hl)"/>
<line x1="919.27" y1="1473.24" x2="912.2" y2="1480.31" stroke="#24367a" stroke-width="1.6" opacity="0.85"/>
<line x1="894.14" y1="1431.84" x2="884.63" y2="1434.93" stroke="#24367a" stroke-width="1.6" opacity="0.85"/>
<line x1="890.37" y1="1383.43" x2="880.49" y2="1381.87" stroke="#24367a" stroke-width="1.6" opacity="0.85"/>
<line x1="908.77" y1="1338.57" x2="900.68" y2="1332.69" stroke="#24367a" stroke-width="1.6" opacity="0.85"/>
<line x1="945.34" y1="1307.04" x2="940.8" y2="1298.13" stroke="#24367a" stroke-width="1.6" opacity="0.85"/>
<line x1="992.1" y1="1295.7" x2="992.1" y2="1285.7" stroke="#24367a" stroke-width="1.6" opacity="0.85"/>
<line x1="1038.86" y1="1307.04" x2="1043.4" y2="1298.13" stroke="#24367a" stroke-width="1.6" opacity="0.85"/>
<line x1="1075.43" y1="1338.57" x2="1083.52" y2="1332.69" stroke="#24367a" stroke-width="1.6" opacity="0.85"/>
<line x1="1093.83" y1="1383.43" x2="1103.71" y2="1381.87" stroke="#24367a" stroke-width="1.6" opacity="0.85"/>
<line x1="1090.06" y1="1431.84" x2="1099.57" y2="1434.93" stroke="#24367a" stroke-width="1.6" opacity="0.85"/>
<line x1="1064.93" y1="1473.24" x2="1072" y2="1480.31" stroke="#24367a" stroke-width="1.6" opacity="0.85"/>
<line x1="976.8" y1="1416.34" x2="943.66" y2="1448.23" stroke="#2448b4" stroke-width="2.6" />
<text transform="translate(992.8 1280.9) scale(1.07 1)" font-family="Liberation Serif, serif" font-weight="bold" font-size="26.6" fill="#ff1020" text-anchor="middle" >50</text>
<text transform="translate(934.7 1289.7) scale(1.07 1)" font-family="Liberation Serif, serif" font-weight="bold" font-size="26.6" fill="#ff1020" text-anchor="middle" >40</text>
<text transform="translate(1054.4 1289.7) scale(1.07 1)" font-family="Liberation Serif, serif" font-weight="bold" font-size="26.6" fill="#ff1020" text-anchor="middle" >60</text>
<text transform="translate(884.4 1330.4) scale(1.07 1)" font-family="Liberation Serif, serif" font-weight="bold" font-size="26.6" fill="#ff1020" text-anchor="middle" >30</text>
<text transform="translate(1105.1 1330.4) scale(1.07 1)" font-family="Liberation Serif, serif" font-weight="bold" font-size="26.6" fill="#ff1020" text-anchor="middle" >70</text>
<text transform="translate(864.3 1389.3) scale(1.07 1)" font-family="Liberation Serif, serif" font-weight="bold" font-size="26.6" fill="#ff1020" text-anchor="middle" >20</text>
<text transform="translate(1124 1389.3) scale(1.07 1)" font-family="Liberation Serif, serif" font-weight="bold" font-size="26.6" fill="#ff1020" text-anchor="middle" >80</text>
<text transform="translate(868.3 1449.5) scale(1.07 1)" font-family="Liberation Serif, serif" font-weight="bold" font-size="26.6" fill="#ff1020" text-anchor="middle" >10</text>
<text transform="translate(1120 1449.5) scale(1.07 1)" font-family="Liberation Serif, serif" font-weight="bold" font-size="26.6" fill="#ff1020" text-anchor="middle" >90</text>
<text transform="translate(904.4 1504.4) scale(1.07 1)" font-family="Liberation Serif, serif" font-weight="bold" font-size="26.6" fill="#ff1020" text-anchor="middle" >0</text>
<text transform="translate(1094.5 1509.7) scale(1.07 1)" font-family="Liberation Serif, serif" font-weight="bold" font-size="26.6" fill="#ff1020" text-anchor="middle" >100</text>
<polygon points="910.7,1510.3 1056.7,1510.3 1051.7,1515.3 915.7,1515.3" fill="url(#g74)" />
<polygon points="910.7,1510.3 915.7,1515.3 915.7,1549.1 910.7,1554.1" fill="url(#g75)" />
<polygon points="910.7,1554.1 915.7,1549.1 1051.7,1549.1 1056.7,1554.1" fill="url(#g76)" />
<polygon points="1056.7,1510.3 1056.7,1554.1 1051.7,1549.1 1051.7,1515.3" fill="url(#g77)" />
<rect x="915.7" y="1515.3" width="136" height="33.8" fill="#ffffff" />
<text transform="translate(983.7 1541.5) scale(1.045 1)" font-family="Liberation Serif, serif" font-weight="bold" font-size="27.5" fill="#ff1020" text-anchor="middle" >0.41</text>
<ellipse cx="900.95" cy="1532.2" rx="10.75" ry="22.4" fill="url(#g78)" stroke="#8e8e8e" stroke-width="1"/>
<line x1="893.2" y1="1532.2" x2="908.7" y2="1532.2" stroke="#8a8a8a" stroke-width="1.2" />
<polygon points="900.95,1519.2 896.45,1526.2 905.45,1526.2" fill="#787878" />
<polygon points="900.95,1545.2 896.45,1538.2 905.45,1538.2" fill="#787878" />
<ellipse cx="1370.9" cy="1399.7" rx="97.5" ry="99" fill="url(#g61)" filter="url(#blur1)"/>
<ellipse cx="1375.9" cy="1403.2" rx="84.7" ry="86.6" fill="#505050" opacity="0.42" filter="url(#blur3)"/>
<ellipse cx="1373.4" cy="1399.7" rx="83.7" ry="85.6" fill="url(#g62)"/>
<ellipse cx="1336.4" cy="1357.7" rx="34" ry="30" fill="url(#hl)"/>
<line x1="1298.57" y1="1473.24" x2="1291.5" y2="1480.31" stroke="#24367a" stroke-width="1.6" opacity="0.85"/>
<line x1="1273.44" y1="1431.84" x2="1263.93" y2="1434.93" stroke="#24367a" stroke-width="1.6" opacity="0.85"/>
<line x1="1269.67" y1="1383.43" x2="1259.79" y2="1381.87" stroke="#24367a" stroke-width="1.6" opacity="0.85"/>
<line x1="1288.07" y1="1338.57" x2="1279.98" y2="1332.69" stroke="#24367a" stroke-width="1.6" opacity="0.85"/>
<line x1="1324.64" y1="1307.04" x2="1320.1" y2="1298.13" stroke="#24367a" stroke-width="1.6" opacity="0.85"/>
<line x1="1371.4" y1="1295.7" x2="1371.4" y2="1285.7" stroke="#24367a" stroke-width="1.6" opacity="0.85"/>
<line x1="1418.16" y1="1307.04" x2="1422.7" y2="1298.13" stroke="#24367a" stroke-width="1.6" opacity="0.85"/>
<line x1="1454.73" y1="1338.57" x2="1462.82" y2="1332.69" stroke="#24367a" stroke-width="1.6" opacity="0.85"/>
<line x1="1473.13" y1="1383.43" x2="1483.01" y2="1381.87" stroke="#24367a" stroke-width="1.6" opacity="0.85"/>
<line x1="1469.36" y1="1431.84" x2="1478.87" y2="1434.93" stroke="#24367a" stroke-width="1.6" opacity="0.85"/>
<line x1="1444.23" y1="1473.24" x2="1451.3" y2="1480.31" stroke="#24367a" stroke-width="1.6" opacity="0.85"/>
<line x1="1396.4" y1="1413.84" x2="1435.59" y2="1437.93" stroke="#2448b4" stroke-width="2.6" />
<text transform="translate(1372.1 1280.9) scale(1.07 1)" font-family="Liberation Serif, serif" font-weight="bold" font-size="26.6" fill="#ff1020" text-anchor="middle" >50</text>
<text transform="translate(1314 1289.7) scale(1.07 1)" font-family="Liberation Serif, serif" font-weight="bold" font-size="26.6" fill="#ff1020" text-anchor="middle" >40</text>
<text transform="translate(1433.7 1289.7) scale(1.07 1)" font-family="Liberation Serif, serif" font-weight="bold" font-size="26.6" fill="#ff1020" text-anchor="middle" >60</text>
<text transform="translate(1263.7 1330.4) scale(1.07 1)" font-family="Liberation Serif, serif" font-weight="bold" font-size="26.6" fill="#ff1020" text-anchor="middle" >30</text>
<text transform="translate(1484.4 1330.4) scale(1.07 1)" font-family="Liberation Serif, serif" font-weight="bold" font-size="26.6" fill="#ff1020" text-anchor="middle" >70</text>
<text transform="translate(1243.6 1389.3) scale(1.07 1)" font-family="Liberation Serif, serif" font-weight="bold" font-size="26.6" fill="#ff1020" text-anchor="middle" >20</text>
<text transform="translate(1503.3 1389.3) scale(1.07 1)" font-family="Liberation Serif, serif" font-weight="bold" font-size="26.6" fill="#ff1020" text-anchor="middle" >80</text>
<text transform="translate(1247.6 1449.5) scale(1.07 1)" font-family="Liberation Serif, serif" font-weight="bold" font-size="26.6" fill="#ff1020" text-anchor="middle" >10</text>
<text transform="translate(1499.3 1449.5) scale(1.07 1)" font-family="Liberation Serif, serif" font-weight="bold" font-size="26.6" fill="#ff1020" text-anchor="middle" >90</text>
<text transform="translate(1283.7 1504.4) scale(1.07 1)" font-family="Liberation Serif, serif" font-weight="bold" font-size="26.6" fill="#ff1020" text-anchor="middle" >0</text>
<text transform="translate(1473.8 1509.7) scale(1.07 1)" font-family="Liberation Serif, serif" font-weight="bold" font-size="26.6" fill="#ff1020" text-anchor="middle" >100</text>
<polygon points="1289.4,1510.3 1436.7,1510.3 1431.7,1515.3 1294.4,1515.3" fill="url(#g79)" />
<polygon points="1289.4,1510.3 1294.4,1515.3 1294.4,1549.1 1289.4,1554.1" fill="url(#g80)" />
<polygon points="1289.4,1554.1 1294.4,1549.1 1431.7,1549.1 1436.7,1554.1" fill="url(#g81)" />
<polygon points="1436.7,1510.3 1436.7,1554.1 1431.7,1549.1 1431.7,1515.3" fill="url(#g82)" />
<rect x="1294.4" y="1515.3" width="137.3" height="33.8" fill="#ffffff" />
<text transform="translate(1363.05 1541.5) scale(1.045 1)" font-family="Liberation Serif, serif" font-weight="bold" font-size="27.5" fill="#ff1020" text-anchor="middle" >95.03</text>
<ellipse cx="1279.65" cy="1532.2" rx="10.75" ry="22.4" fill="url(#g83)" stroke="#8e8e8e" stroke-width="1"/>
<line x1="1271.9" y1="1532.2" x2="1287.4" y2="1532.2" stroke="#8a8a8a" stroke-width="1.2" />
<polygon points="1279.65,1519.2 1275.15,1526.2 1284.15,1526.2" fill="#787878" />
<polygon points="1279.65,1545.2 1275.15,1538.2 1284.15,1538.2" fill="#787878" />
<rect x="1628" y="312" width="1652" height="579.5" fill="#c4c4c4" />
<rect x="1628" y="312" width="22" height="575.5" fill="url(#g84)" />
<rect x="1628" y="312" width="1632" height="4" fill="#dadada" />
<rect x="3255" y="312" width="25" height="579.5" fill="url(#g85)" />
<rect x="1628" y="886.5" width="1652" height="5" fill="url(#g86)" />
<rect x="1777.7" y="328.4" width="1461.8" height="472.2" fill="#e2e2e2" />
<rect x="1777.7" y="328.4" width="1459.8" height="470.4" fill="#555555" />
<rect x="1779.5" y="330" width="1458" height="468.8" fill="#000" />
<g clip-path="url(#c87)">
<path d="M1780.4 339.95H3236.25M1780.4 349.69H3236.25M1780.4 359.44H3236.25M1780.4 378.93H3236.25M1780.4 388.68H3236.25M1780.4 398.42H3236.25M1780.4 417.91H3236.25M1780.4 427.66H3236.25M1780.4 437.4H3236.25M1780.4 456.9H3236.25M1780.4 466.64H3236.25M1780.4 476.39H3236.25M1780.4 495.88H3236.25M1780.4 505.62H3236.25M1780.4 515.37H3236.25M1780.4 534.86H3236.25M1780.4 544.61H3236.25M1780.4 554.35H3236.25M1780.4 573.85H3236.25M1780.4 583.59H3236.25M1780.4 593.34H3236.25M1780.4 612.83H3236.25M1780.4 622.58H3236.25M1780.4 632.32H3236.25M1780.4 651.81H3236.25M1780.4 661.56H3236.25M1780.4 671.3H3236.25M1780.4 690.8H3236.25M1780.4 700.54H3236.25M1780.4 710.29H3236.25M1780.4 729.78H3236.25M1780.4 739.53H3236.25M1780.4 749.27H3236.25M1780.4 768.76H3236.25M1780.4 778.51H3236.25M1780.4 788.25H3236.25M1824.23 330.2V798M1849.86 330.2V798M1868.05 330.2V798M1882.16 330.2V798M1893.69 330.2V798M1903.43 330.2V798M1911.88 330.2V798M1919.32 330.2V798M1969.81 330.2V798M1995.45 330.2V798M2013.64 330.2V798M2027.74 330.2V798M2039.27 330.2V798M2049.02 330.2V798M2057.46 330.2V798M2064.91 330.2V798M2115.4 330.2V798M2141.03 330.2V798M2159.22 330.2V798M2173.33 330.2V798M2184.86 330.2V798M2194.6 330.2V798M2203.05 330.2V798M2210.49 330.2V798M2260.98 330.2V798M2286.62 330.2V798M2304.81 330.2V798M2318.91 330.2V798M2330.44 330.2V798M2340.19 330.2V798M2348.63 330.2V798M2356.08 330.2V798M2406.57 330.2V798M2432.2 330.2V798M2450.39 330.2V798M2464.5 330.2V798M2476.03 330.2V798M2485.77 330.2V798M2494.22 330.2V798M2501.66 330.2V798M2552.15 330.2V798M2577.79 330.2V798M2595.98 330.2V798M2610.08 330.2V798M2621.61 330.2V798M2631.36 330.2V798M2639.8 330.2V798M2647.25 330.2V798M2697.74 330.2V798M2723.37 330.2V798M2741.56 330.2V798M2755.67 330.2V798M2767.2 330.2V798M2776.94 330.2V798M2785.39 330.2V798M2792.83 330.2V798M2843.32 330.2V798M2868.96 330.2V798M2887.15 330.2V798M2901.25 330.2V798M2912.78 330.2V798M2922.53 330.2V798M2930.97 330.2V798M2938.42 330.2V798M2988.91 330.2V798M3014.54 330.2V798M3032.73 330.2V798M3046.84 330.2V798M3058.37 330.2V798M3068.11 330.2V798M3076.56 330.2V798M3084 330.2V798M3134.49 330.2V798M3160.13 330.2V798M3178.32 330.2V798M3192.42 330.2V798M3203.95 330.2V798M3213.7 330.2V798M3222.14 330.2V798M3229.59 330.2V798" stroke="#6a6800" stroke-width="1.3" fill="none"/>
<path d="M1780.4 369.18H3236.25M1780.4 408.17H3236.25M1780.4 447.15H3236.25M1780.4 486.13H3236.25M1780.4 525.12H3236.25M1780.4 564.1H3236.25M1780.4 603.08H3236.25M1780.4 642.07H3236.25M1780.4 681.05H3236.25M1780.4 720.03H3236.25M1780.4 759.02H3236.25M1925.99 330.2V798M2071.57 330.2V798M2217.16 330.2V798M2362.74 330.2V798M2508.32 330.2V798M2653.91 330.2V798M2799.49 330.2V798M2945.08 330.2V798M3090.66 330.2V798" stroke="#a2a000" stroke-width="1.55" fill="none"/>
<path d="M1779.5 777.0H2653.99V339.3V777.0H3237.5" fill="none" stroke="#00ff00" stroke-width="5.6"/>
<path d="M2326.08 346.59V777.0H3020.57V350.03" fill="none" stroke="#ff4040" stroke-width="5.4" stroke-linejoin="miter"/>
<path d="M1780.7 770.88 L1783.7 767.74 L1786.7 764.6 L1789.7 761.46 L1792.7 758.31 L1795.7 755.17 L1798.7 752.03 L1801.7 748.89 L1804.7 745.74 L1807.7 742.6 L1810.7 739.45 L1813.7 736.31 L1816.7 733.16 L1819.7 730.02 L1822.7 726.87 L1825.7 723.72 L1828.7 720.58 L1831.7 717.43 L1834.7 714.28 L1837.7 711.13 L1840.7 707.98 L1843.7 704.83 L1846.7 701.68 L1849.7 698.53 L1852.7 695.38 L1855.7 692.23 L1858.7 689.08 L1861.7 685.93 L1864.7 682.78 L1867.7 679.62 L1870.7 676.47 L1873.7 673.31 L1876.7 670.14 L1879.7 666.98 L1882.7 663.81 L1885.7 660.64 L1888.7 657.47 L1891.7 654.3 L1894.7 651.13 L1897.7 647.96 L1900.7 644.8 L1903.7 641.65 L1906.7 638.49 L1909.7 635.35 L1912.7 632.21 L1915.7 629.08 L1918.7 625.96 L1921.7 622.86 L1924.7 619.76 L1927.7 616.67 L1930.7 613.61 L1933.7 610.57 L1936.7 607.54 L1939.7 604.53 L1942.7 601.52 L1945.7 598.51 L1948.7 595.5 L1951.7 592.48 L1954.7 589.45 L1957.7 586.39 L1960.7 583.31 L1963.7 580.2 L1966.7 577.06 L1969.7 573.91 L1972.7 570.74 L1975.7 567.56 L1978.7 564.38 L1981.7 561.19 L1984.7 558.02 L1987.7 554.85 L1990.7 551.7 L1993.7 548.57 L1996.7 545.47 L1999.7 542.39 L2002.7 539.31 L2005.7 536.23 L2008.7 533.16 L2011.7 530.09 L2014.7 527.04 L2017.7 524 L2020.7 520.99 L2023.7 518 L2026.7 515.05 L2029.7 512.13 L2032.7 509.26 L2035.7 506.43 L2038.7 503.64 L2041.7 500.87 L2044.7 498.12 L2047.7 495.39 L2050.7 492.69 L2053.7 490.03 L2056.7 487.39 L2059.7 484.8 L2062.7 482.24 L2065.7 479.72 L2068.7 477.25 L2071.7 474.83 L2074.7 472.45 L2077.7 470.11 L2080.7 467.82 L2083.7 465.56 L2086.7 463.33 L2089.7 461.13 L2092.7 458.96 L2095.7 456.81 L2098.7 454.69 L2101.7 452.58 L2104.7 450.5 L2107.7 448.42 L2110.7 446.35 L2113.7 444.29 L2116.7 442.24 L2119.7 440.2 L2122.7 438.17 L2125.7 436.15 L2128.7 434.16 L2131.7 432.19 L2134.7 430.24 L2137.7 428.32 L2140.7 426.44 L2143.7 424.59 L2146.7 422.78 L2149.7 421.02 L2152.7 419.3 L2155.7 417.62 L2158.7 415.97 L2161.7 414.36 L2164.7 412.77 L2167.7 411.21 L2170.7 409.65 L2173.7 408.11 L2176.7 406.58 L2179.7 405.04 L2182.7 403.5 L2185.7 401.96 L2188.7 400.39 L2191.7 398.82 L2194.7 397.23 L2197.7 395.65 L2200.7 394.07 L2203.7 392.51 L2206.7 390.96 L2209.7 389.44 L2212.7 387.95 L2215.7 386.49 L2218.7 385.08 L2221.7 383.7 L2224.7 382.33 L2227.7 380.98 L2230.7 379.64 L2233.7 378.33 L2236.7 377.03 L2239.7 375.75 L2242.7 374.48 L2245.7 373.23 L2248.7 372 L2251.7 370.79 L2254.7 369.59 L2257.7 368.41 L2260.7 367.25 L2263.7 366.1 L2266.7 364.95 L2269.7 363.81 L2272.7 362.68 L2275.7 361.55 L2278.7 360.45 L2281.7 359.37 L2284.7 358.31 L2287.7 357.27 L2290.7 356.27 L2293.7 355.31 L2296.7 354.38 L2299.7 353.5 L2302.7 352.65 L2305.7 351.84 L2308.7 351.06 L2311.7 350.31 L2314.7 349.58 L2317.7 348.88 L2320.7 348.2 L2323.7 347.55 L2326.7 346.91 L2329.7 346.28 L2332.7 345.63 L2335.7 344.97 L2338.7 344.32 L2341.7 343.68 L2344.7 343.06 L2347.7 342.47 L2350.7 341.92 L2353.7 341.41 L2356.7 340.96 L2359.7 340.57 L2362.7 340.25 L2365.7 340.01 L2368.7 339.79 L2371.7 339.57 L2374.7 339.36 L2377.7 339.16 L2380.7 338.97 L2383.7 338.79 L2386.7 338.63 L2389.7 338.47 L2392.7 338.33 L2395.7 338.2 L2398.7 338.09 L2401.7 338 L2404.7 337.93 L2407.7 337.87 L2410.7 337.84 L2413.68 337.83 L2416.68 337.85 L2419.68 337.86 L2422.68 337.88 L2425.68 337.9 L2428.68 337.91 L2431.68 337.93 L2434.68 337.95 L2437.68 337.96 L2440.68 337.98 L2443.68 338 L2446.68 338.01 L2449.68 338.03 L2452.68 338.05 L2455.68 338.06 L2458.68 338.08 L2461.68 338.1 L2464.68 338.11 L2467.68 338.13 L2470.68 338.15 L2473.68 338.16 L2476.68 338.18 L2479.68 338.2 L2482.68 338.21 L2485.68 338.23 L2488.68 338.25 L2491.68 338.26 L2494.68 338.28 L2497.68 338.3 L2500.68 338.31 L2503.68 338.33 L2506.68 338.35 L2509.68 338.36 L2512.68 338.38 L2515.68 338.4 L2518.68 338.41 L2521.68 338.43 L2524.68 338.45 L2527.68 338.46 L2530.68 338.48 L2533.68 338.49 L2536.68 338.49 L2539.68 338.49 L2542.68 338.49 L2545.68 338.49 L2548.68 338.49 L2551.68 338.49 L2554.68 338.49 L2557.68 338.49 L2560.68 338.49 L2563.68 338.49 L2566.68 338.49 L2569.68 338.49 L2572.68 338.49 L2575.68 338.49 L2578.68 338.49 L2581.68 338.49 L2584.68 338.49 L2587.68 338.49 L2590.68 338.49 L2593.68 338.49 L2596.68 338.49 L2599.68 338.49 L2602.68 338.49 L2605.68 338.49 L2608.68 338.5 L2611.68 338.5 L2614.68 338.5 L2617.68 338.5 L2620.68 338.5 L2623.68 338.5 L2626.68 338.5 L2629.68 338.5 L2632.68 338.5 L2635.68 338.5 L2638.68 338.5 L2641.68 338.5 L2644.68 338.5 L2647.68 338.5 L2650.68 338.5 L2653.68 338.5 L2656.68 338.5 L2659.68 338.5 L2662.68 338.5 L2665.68 338.5 L2668.68 338.5 L2671.68 338.5 L2674.68 338.5 L2677.68 338.5 L2680.68 338.5 L2683.68 338.5 L2686.68 338.5 L2689.68 338.5 L2692.68 338.5 L2695.68 338.5 L2698.68 338.5 L2701.68 338.5 L2704.68 338.5 L2707.68 338.5 L2710.68 338.5 L2713.68 338.5 L2716.68 338.5 L2719.68 338.5 L2722.68 338.5 L2725.68 338.5 L2728.68 338.5 L2731.68 338.5 L2734.68 338.5 L2737.68 338.5 L2740.68 338.5 L2743.68 338.5 L2746.68 338.5 L2749.68 338.5 L2752.68 338.5 L2755.68 338.5 L2758.68 338.5 L2761.68 338.5 L2764.68 338.5 L2767.68 338.5 L2770.68 338.5 L2773.68 338.5 L2776.68 338.5 L2779.68 338.5 L2782.68 338.5 L2785.68 338.5 L2788.68 338.51 L2791.68 338.51 L2794.68 338.51 L2797.68 338.51 L2800.68 338.51 L2803.68 338.51 L2806.68 338.51 L2809.68 338.52 L2812.68 338.52 L2815.68 338.52 L2818.68 338.52 L2821.68 338.53 L2824.68 338.53 L2827.68 338.53 L2830.68 338.54 L2833.68 338.54 L2836.68 338.54 L2839.68 338.55 L2842.68 338.55 L2845.68 338.56 L2848.68 338.57 L2851.68 338.57 L2854.68 338.58 L2857.68 338.59 L2860.68 338.6 L2863.68 338.61 L2866.68 338.62 L2869.68 338.63 L2872.68 338.65 L2875.68 338.66 L2878.68 338.68 L2881.68 338.7 L2884.68 338.72 L2887.68 338.74 L2890.68 338.76 L2893.68 338.79 L2896.68 338.82 L2899.68 338.85 L2902.68 338.88 L2905.68 338.92 L2908.68 338.96 L2911.68 339.01 L2914.68 339.06 L2917.68 339.11 L2920.68 339.17 L2923.68 339.24 L2926.68 339.31 L2929.68 339.39 L2932.68 339.48 L2935.68 339.57 L2938.68 339.68 L2941.68 339.79 L2944.68 339.91 L2947.68 340.05 L2950.68 340.19 L2953.68 340.35 L2956.68 340.53 L2959.68 340.72 L2962.68 340.92 L2965.68 341.15 L2968.68 341.39 L2971.68 341.65 L2974.68 341.94 L2977.68 342.24 L2980.68 342.58 L2983.68 342.93 L2986.68 343.32 L2989.68 343.73 L2992.68 344.17 L2995.68 344.65 L2998.68 345.15 L3001.68 345.69 L3004.68 346.27 L3007.68 346.87 L3010.68 347.52 L3013.68 348.2 L3016.68 348.92 L3019.68 349.68 L3022.68 350.48 L3025.68 351.31 L3028.68 352.18 L3031.68 353.09 L3034.68 354.04 L3037.68 355.02 L3040.68 356.04 L3043.68 357.09 L3046.68 358.18 L3049.68 359.3 L3052.68 360.45 L3055.68 361.64 L3058.68 362.85 L3061.68 364.09 L3064.68 365.35 L3067.68 366.64 L3070.68 367.96 L3073.68 369.29 L3076.68 370.65 L3079.68 372.02 L3082.68 373.42 L3085.68 374.83 L3088.68 376.25 L3091.68 377.7 L3094.68 379.15 L3097.68 380.62 L3100.68 382.1 L3103.68 383.59 L3106.68 385.08 L3109.68 386.59 L3112.68 388.11 L3115.68 389.63 L3118.68 391.17 L3121.68 392.7 L3124.68 394.25 L3127.68 395.8 L3130.68 397.35 L3133.68 398.91 L3136.68 400.48 L3139.68 402.04 L3142.68 403.61 L3145.68 405.19 L3148.68 406.76 L3151.68 408.34 L3154.68 409.93 L3157.68 411.51 L3160.68 413.1 L3163.68 414.68 L3166.68 416.27 L3169.68 417.86 L3172.68 419.46 L3175.68 421.05 L3178.68 422.65 L3181.68 424.24 L3184.68 425.84 L3187.68 427.44 L3190.68 429.03 L3193.68 430.63 L3196.68 432.23 L3199.68 433.83 L3202.68 435.44 L3205.68 437.04 L3208.68 438.64 L3211.68 440.24 L3214.68 441.84 L3217.68 443.45 L3220.68 445.05 L3223.68 446.66 L3226.68 448.26 L3229.68 449.86 L3232.68 451.47 L3235.68 453.07 L3238.68 454.68 L3241.68 456.28" fill="none" stroke="#ff3030" stroke-width="3.2"/>
<path d="M1779.5 769.68 L1782.5 766.54 L1785.5 763.4 L1788.5 760.26 L1791.5 757.11 L1794.5 753.97 L1797.5 750.83 L1800.5 747.69 L1803.5 744.54 L1806.5 741.4 L1809.5 738.25 L1812.5 735.11 L1815.5 731.96 L1818.5 728.82 L1821.5 725.67 L1824.5 722.52 L1827.5 719.38 L1830.5 716.23 L1833.5 713.08 L1836.5 709.93 L1839.5 706.78 L1842.5 703.63 L1845.5 700.48 L1848.5 697.33 L1851.5 694.18 L1854.5 691.03 L1857.5 687.88 L1860.5 684.73 L1863.5 681.58 L1866.5 678.42 L1869.5 675.27 L1872.5 672.11 L1875.5 668.94 L1878.5 665.78 L1881.5 662.61 L1884.5 659.44 L1887.5 656.27 L1890.5 653.1 L1893.5 649.93 L1896.5 646.76 L1899.5 643.6 L1902.5 640.45 L1905.5 637.29 L1908.5 634.15 L1911.5 631.01 L1914.5 627.88 L1917.5 624.76 L1920.5 621.66 L1923.5 618.56 L1926.5 615.47 L1929.5 612.41 L1932.5 609.37 L1935.5 606.34 L1938.5 603.33 L1941.5 600.32 L1944.5 597.31 L1947.5 594.3 L1950.5 591.28 L1953.5 588.25 L1956.5 585.19 L1959.5 582.11 L1962.5 579 L1965.5 575.86 L1968.5 572.71 L1971.5 569.54 L1974.5 566.36 L1977.5 563.18 L1980.5 559.99 L1983.5 556.82 L1986.5 553.65 L1989.5 550.5 L1992.5 547.37 L1995.5 544.27 L1998.5 541.19 L2001.5 538.11 L2004.5 535.03 L2007.5 531.96 L2010.5 528.89 L2013.5 525.84 L2016.5 522.8 L2019.5 519.79 L2022.5 516.8 L2025.5 513.85 L2028.5 510.93 L2031.5 508.06 L2034.5 505.23 L2037.5 502.44 L2040.5 499.67 L2043.5 496.92 L2046.5 494.19 L2049.5 491.49 L2052.5 488.83 L2055.5 486.19 L2058.5 483.6 L2061.5 481.04 L2064.5 478.52 L2067.5 476.05 L2070.5 473.63 L2073.5 471.25 L2076.5 468.91 L2079.5 466.62 L2082.5 464.36 L2085.5 462.13 L2088.5 459.93 L2091.5 457.76 L2094.5 455.61 L2097.5 453.49 L2100.5 451.38 L2103.5 449.3 L2106.5 447.22 L2109.5 445.15 L2112.5 443.09 L2115.5 441.04 L2118.5 439 L2121.5 436.97 L2124.5 434.95 L2127.5 432.96 L2130.5 430.99 L2133.5 429.04 L2136.5 427.12 L2139.5 425.24 L2142.5 423.39 L2145.5 421.58 L2148.5 419.82 L2151.5 418.1 L2154.5 416.42 L2157.5 414.77 L2160.5 413.16 L2163.5 411.57 L2166.5 410.01 L2169.5 408.45 L2172.5 406.91 L2175.5 405.38 L2178.5 403.84 L2181.5 402.3 L2184.5 400.76 L2187.5 399.19 L2190.5 397.62 L2193.5 396.03 L2196.5 394.45 L2199.5 392.87 L2202.5 391.31 L2205.5 389.76 L2208.5 388.24 L2211.5 386.75 L2214.5 385.29 L2217.5 383.88 L2220.5 382.5 L2223.5 381.13 L2226.5 379.78 L2229.5 378.44 L2232.5 377.13 L2235.5 375.83 L2238.5 374.55 L2241.5 373.28 L2244.5 372.03 L2247.5 370.8 L2250.5 369.59 L2253.5 368.39 L2256.5 367.21 L2259.5 366.05 L2262.5 364.9 L2265.5 363.75 L2268.5 362.61 L2271.5 361.48 L2274.5 360.35 L2277.5 359.25 L2280.5 358.17 L2283.5 357.11 L2286.5 356.07 L2289.5 355.07 L2292.5 354.11 L2295.5 353.18 L2298.5 352.3 L2301.5 351.45 L2304.5 350.64 L2307.5 349.86 L2310.5 349.11 L2313.5 348.38 L2316.5 347.68 L2319.5 347 L2322.5 346.35 L2325.5 345.71 L2328.5 345.08 L2331.5 344.43 L2334.5 343.77 L2337.5 343.12 L2340.5 342.48 L2343.5 341.86 L2346.5 341.27 L2349.5 340.72 L2352.5 340.21 L2355.5 339.76 L2358.5 339.37 L2361.5 339.05 L2364.5 338.81 L2367.5 338.59 L2370.5 338.37 L2373.5 338.16 L2376.5 337.96 L2379.5 337.77 L2382.5 337.59 L2385.5 337.43 L2388.5 337.27 L2391.5 337.13 L2394.5 337 L2397.5 336.89 L2400.5 336.8 L2403.5 336.73 L2406.5 336.67 L2409.5 336.64 L2412.48 336.63 L2415.48 336.65 L2418.48 336.66 L2421.48 336.68 L2424.48 336.7 L2427.48 336.71 L2430.48 336.73 L2433.48 336.75 L2436.48 336.76 L2439.48 336.78 L2442.48 336.8 L2445.48 336.81 L2448.48 336.83 L2451.48 336.85 L2454.48 336.86 L2457.48 336.88 L2460.48 336.9 L2463.48 336.91 L2466.48 336.93 L2469.48 336.95 L2472.48 336.96 L2475.48 336.98 L2478.48 337 L2481.48 337.01 L2484.48 337.03 L2487.48 337.05 L2490.48 337.06 L2493.48 337.08 L2496.48 337.1 L2499.48 337.11 L2502.48 337.13 L2505.48 337.15 L2508.48 337.16 L2511.48 337.18 L2514.48 337.2 L2517.48 337.21 L2520.48 337.23 L2523.48 337.25 L2526.48 337.26 L2529.48 337.28 L2532.48 337.29 L2535.48 337.29 L2538.48 337.29 L2541.48 337.29 L2544.48 337.29 L2547.48 337.29 L2550.48 337.29 L2553.48 337.29 L2556.48 337.29 L2559.48 337.29 L2562.48 337.29 L2565.48 337.29 L2568.48 337.29 L2571.48 337.29 L2574.48 337.29 L2577.48 337.29 L2580.48 337.29 L2583.48 337.29 L2586.48 337.29 L2589.48 337.29 L2592.48 337.29 L2595.48 337.29 L2598.48 337.29 L2601.48 337.29 L2604.48 337.29 L2607.48 337.3 L2610.48 337.3 L2613.48 337.3 L2616.48 337.3 L2619.48 337.3 L2622.48 337.3 L2625.48 337.3 L2628.48 337.3 L2631.48 337.3 L2634.48 337.3 L2637.48 337.3 L2640.48 337.3 L2643.48 337.3 L2646.48 337.3 L2649.48 337.3 L2652.48 337.3 L2655.48 337.3 L2658.48 337.3 L2661.48 337.3 L2664.48 337.3 L2667.48 337.3 L2670.48 337.3 L2673.48 337.3 L2676.48 337.3 L2679.48 337.3 L2682.48 337.3 L2685.48 337.3 L2688.48 337.3 L2691.48 337.3 L2694.48 337.3 L2697.48 337.3 L2700.48 337.3 L2703.48 337.3 L2706.48 337.3 L2709.48 337.3 L2712.48 337.3 L2715.48 337.3 L2718.48 337.3 L2721.48 337.3 L2724.48 337.3 L2727.48 337.3 L2730.48 337.3 L2733.48 337.3 L2736.48 337.3 L2739.48 337.3 L2742.48 337.3 L2745.48 337.3 L2748.48 337.3 L2751.48 337.3 L2754.48 337.3 L2757.48 337.3 L2760.48 337.3 L2763.48 337.3 L2766.48 337.3 L2769.48 337.3 L2772.48 337.3 L2775.48 337.3 L2778.48 337.3 L2781.48 337.3 L2784.48 337.3 L2787.48 337.31 L2790.48 337.31 L2793.48 337.31 L2796.48 337.31 L2799.48 337.31 L2802.48 337.31 L2805.48 337.31 L2808.48 337.32 L2811.48 337.32 L2814.48 337.32 L2817.48 337.32 L2820.48 337.33 L2823.48 337.33 L2826.48 337.33 L2829.48 337.34 L2832.48 337.34 L2835.48 337.34 L2838.48 337.35 L2841.48 337.35 L2844.48 337.36 L2847.48 337.37 L2850.48 337.37 L2853.48 337.38 L2856.48 337.39 L2859.48 337.4 L2862.48 337.41 L2865.48 337.42 L2868.48 337.43 L2871.48 337.45 L2874.48 337.46 L2877.48 337.48 L2880.48 337.5 L2883.48 337.52 L2886.48 337.54 L2889.48 337.56 L2892.48 337.59 L2895.48 337.62 L2898.48 337.65 L2901.48 337.68 L2904.48 337.72 L2907.48 337.76 L2910.48 337.81 L2913.48 337.86 L2916.48 337.91 L2919.48 337.97 L2922.48 338.04 L2925.48 338.11 L2928.48 338.19 L2931.48 338.28 L2934.48 338.37 L2937.48 338.48 L2940.48 338.59 L2943.48 338.71 L2946.48 338.85 L2949.48 338.99 L2952.48 339.15 L2955.48 339.33 L2958.48 339.52 L2961.48 339.72 L2964.48 339.95 L2967.48 340.19 L2970.48 340.45 L2973.48 340.74 L2976.48 341.04 L2979.48 341.38 L2982.48 341.73 L2985.48 342.12 L2988.48 342.53 L2991.48 342.97 L2994.48 343.45 L2997.48 343.95 L3000.48 344.49 L3003.48 345.07 L3006.48 345.67 L3009.48 346.32 L3012.48 347 L3015.48 347.72 L3018.48 348.48 L3021.48 349.28 L3024.48 350.11 L3027.48 350.98 L3030.48 351.89 L3033.48 352.84 L3036.48 353.82 L3039.48 354.84 L3042.48 355.89 L3045.48 356.98 L3048.48 358.1 L3051.48 359.25 L3054.48 360.44 L3057.48 361.65 L3060.48 362.89 L3063.48 364.15 L3066.48 365.44 L3069.48 366.76 L3072.48 368.09 L3075.48 369.45 L3078.48 370.82 L3081.48 372.22 L3084.48 373.63 L3087.48 375.05 L3090.48 376.5 L3093.48 377.95 L3096.48 379.42 L3099.48 380.9 L3102.48 382.39 L3105.48 383.88 L3108.48 385.39 L3111.48 386.91 L3114.48 388.43 L3117.48 389.97 L3120.48 391.5 L3123.48 393.05 L3126.48 394.6 L3129.48 396.15 L3132.48 397.71 L3135.48 399.28 L3138.48 400.84 L3141.48 402.41 L3144.48 403.99 L3147.48 405.56 L3150.48 407.14 L3153.48 408.73 L3156.48 410.31 L3159.48 411.9 L3162.48 413.48 L3165.48 415.07 L3168.48 416.66 L3171.48 418.26 L3174.48 419.85 L3177.48 421.45 L3180.48 423.04 L3183.48 424.64 L3186.48 426.24 L3189.48 427.83 L3192.48 429.43 L3195.48 431.03 L3198.48 432.63 L3201.48 434.24 L3204.48 435.84 L3207.48 437.44 L3210.48 439.04 L3213.48 440.64 L3216.48 442.25 L3219.48 443.85 L3222.48 445.46 L3225.48 447.06 L3228.48 448.66 L3231.48 450.27 L3234.48 451.87 L3237.48 453.48 L3240.48 455.08" fill="none" stroke="#fff" stroke-width="3.6" stroke-linejoin="round"/>
</g>
<text transform="translate(1763.8 337.8) scale(0.915 1)" font-family="Liberation Sans, sans-serif" font-weight="normal" font-size="21.2" fill="#000" text-anchor="end" >40.0</text>
<line x1="1767" y1="330.2" x2="1775.6" y2="330.2" stroke="#000" stroke-width="2" />
<text transform="translate(1763.8 376.78) scale(0.915 1)" font-family="Liberation Sans, sans-serif" font-weight="normal" font-size="21.2" fill="#000" text-anchor="end" >30.0</text>
<line x1="1767" y1="369.18" x2="1775.6" y2="369.18" stroke="#000" stroke-width="2" />
<text transform="translate(1763.8 415.77) scale(0.915 1)" font-family="Liberation Sans, sans-serif" font-weight="normal" font-size="21.2" fill="#000" text-anchor="end" >20.0</text>
<line x1="1767" y1="408.17" x2="1775.6" y2="408.17" stroke="#000" stroke-width="2" />
<text transform="translate(1763.8 454.75) scale(0.915 1)" font-family="Liberation Sans, sans-serif" font-weight="normal" font-size="21.2" fill="#000" text-anchor="end" >10.0</text>
<line x1="1767" y1="447.15" x2="1775.6" y2="447.15" stroke="#000" stroke-width="2" />
<text transform="translate(1763.8 493.73) scale(0.915 1)" font-family="Liberation Sans, sans-serif" font-weight="normal" font-size="21.2" fill="#000" text-anchor="end" >0.0</text>
<line x1="1767" y1="486.13" x2="1775.6" y2="486.13" stroke="#000" stroke-width="2" />
<text transform="translate(1763.8 532.72) scale(0.915 1)" font-family="Liberation Sans, sans-serif" font-weight="normal" font-size="21.2" fill="#000" text-anchor="end" >10.0</text>
<line x1="1718.55" y1="525.92" x2="1723.85" y2="525.92" stroke="#000" stroke-width="2" />
<line x1="1767" y1="525.12" x2="1775.6" y2="525.12" stroke="#000" stroke-width="2" />
<text transform="translate(1763.8 571.7) scale(0.915 1)" font-family="Liberation Sans, sans-serif" font-weight="normal" font-size="21.2" fill="#000" text-anchor="end" >20.0</text>
<line x1="1718.55" y1="564.9" x2="1723.85" y2="564.9" stroke="#000" stroke-width="2" />
<line x1="1767" y1="564.1" x2="1775.6" y2="564.1" stroke="#000" stroke-width="2" />
<text transform="translate(1763.8 610.68) scale(0.915 1)" font-family="Liberation Sans, sans-serif" font-weight="normal" font-size="21.2" fill="#000" text-anchor="end" >30.0</text>
<line x1="1718.55" y1="603.88" x2="1723.85" y2="603.88" stroke="#000" stroke-width="2" />
<line x1="1767" y1="603.08" x2="1775.6" y2="603.08" stroke="#000" stroke-width="2" />
<text transform="translate(1763.8 649.67) scale(0.915 1)" font-family="Liberation Sans, sans-serif" font-weight="normal" font-size="21.2" fill="#000" text-anchor="end" >40.0</text>
<line x1="1718.55" y1="642.87" x2="1723.85" y2="642.87" stroke="#000" stroke-width="2" />
<line x1="1767" y1="642.07" x2="1775.6" y2="642.07" stroke="#000" stroke-width="2" />
<text transform="translate(1763.8 688.65) scale(0.915 1)" font-family="Liberation Sans, sans-serif" font-weight="normal" font-size="21.2" fill="#000" text-anchor="end" >50.0</text>
<line x1="1718.55" y1="681.85" x2="1723.85" y2="681.85" stroke="#000" stroke-width="2" />
<line x1="1767" y1="681.05" x2="1775.6" y2="681.05" stroke="#000" stroke-width="2" />
<text transform="translate(1763.8 727.63) scale(0.915 1)" font-family="Liberation Sans, sans-serif" font-weight="normal" font-size="21.2" fill="#000" text-anchor="end" >60.0</text>
<line x1="1718.55" y1="720.83" x2="1723.85" y2="720.83" stroke="#000" stroke-width="2" />
<line x1="1767" y1="720.03" x2="1775.6" y2="720.03" stroke="#000" stroke-width="2" />
<text transform="translate(1763.8 766.62) scale(0.915 1)" font-family="Liberation Sans, sans-serif" font-weight="normal" font-size="21.2" fill="#000" text-anchor="end" >70.0</text>
<line x1="1718.55" y1="759.82" x2="1723.85" y2="759.82" stroke="#000" stroke-width="2" />
<line x1="1767" y1="759.02" x2="1775.6" y2="759.02" stroke="#000" stroke-width="2" />
<text transform="translate(1763.8 805.6) scale(0.915 1)" font-family="Liberation Sans, sans-serif" font-weight="normal" font-size="21.2" fill="#000" text-anchor="end" >80.0</text>
<line x1="1718.55" y1="798.8" x2="1723.85" y2="798.8" stroke="#000" stroke-width="2" />
<line x1="1767" y1="798" x2="1775.6" y2="798" stroke="#000" stroke-width="2" />
<g clip-path="url(#c88)">
<line x1="1780.4" y1="803" x2="1780.4" y2="811.3" stroke="#000" stroke-width="1.6" />
<text transform="translate(1778.9 833.1) scale(0.915 1)" font-family="Liberation Sans, sans-serif" font-weight="normal" font-size="21.2" fill="#000" text-anchor="middle" >0.01</text>
<line x1="1925.99" y1="803" x2="1925.99" y2="811.3" stroke="#000" stroke-width="1.6" />
<text transform="translate(1924.49 833.1) scale(0.915 1)" font-family="Liberation Sans, sans-serif" font-weight="normal" font-size="21.2" fill="#000" text-anchor="middle" >0.10</text>
<line x1="2071.57" y1="803" x2="2071.57" y2="811.3" stroke="#000" stroke-width="1.6" />
<text transform="translate(2070.07 833.1) scale(0.915 1)" font-family="Liberation Sans, sans-serif" font-weight="normal" font-size="21.2" fill="#000" text-anchor="middle" >1.00</text>
<line x1="2217.16" y1="803" x2="2217.16" y2="811.3" stroke="#000" stroke-width="1.6" />
<text transform="translate(2215.66 833.1) scale(0.915 1)" font-family="Liberation Sans, sans-serif" font-weight="normal" font-size="21.2" fill="#000" text-anchor="middle" >10.00</text>
<line x1="2362.74" y1="803" x2="2362.74" y2="811.3" stroke="#000" stroke-width="1.6" />
<text transform="translate(2361.24 833.1) scale(0.915 1)" font-family="Liberation Sans, sans-serif" font-weight="normal" font-size="21.2" fill="#000" text-anchor="middle" >100.00</text>
<line x1="2508.32" y1="803" x2="2508.32" y2="811.3" stroke="#000" stroke-width="1.6" />
<text transform="translate(2506.82 833.1) scale(0.915 1)" font-family="Liberation Sans, sans-serif" font-weight="normal" font-size="21.2" fill="#000" text-anchor="middle" >1000.00</text>
<line x1="2653.91" y1="803" x2="2653.91" y2="811.3" stroke="#000" stroke-width="1.6" />
<text transform="translate(2652.41 833.1) scale(0.915 1)" font-family="Liberation Sans, sans-serif" font-weight="normal" font-size="21.2" fill="#000" text-anchor="middle" >10000.00</text>
<line x1="2799.49" y1="803" x2="2799.49" y2="811.3" stroke="#000" stroke-width="1.6" />
<text transform="translate(2797.99 833.1) scale(0.915 1)" font-family="Liberation Sans, sans-serif" font-weight="normal" font-size="21.2" fill="#000" text-anchor="middle" >100000.00</text>
<line x1="2945.08" y1="803" x2="2945.08" y2="811.3" stroke="#000" stroke-width="1.6" />
<text transform="translate(2943.58 833.1) scale(0.915 1)" font-family="Liberation Sans, sans-serif" font-weight="normal" font-size="21.2" fill="#000" text-anchor="middle" >1000000.00</text>
<line x1="3090.66" y1="803" x2="3090.66" y2="811.3" stroke="#000" stroke-width="1.6" />
<text transform="translate(3089.16 833.1) scale(0.915 1)" font-family="Liberation Sans, sans-serif" font-weight="normal" font-size="21.2" fill="#000" text-anchor="middle" >10000000.00</text>
<line x1="3236.25" y1="803" x2="3236.25" y2="811.3" stroke="#000" stroke-width="1.6" />
<text transform="translate(3234.75 833.1) scale(0.915 1)" font-family="Liberation Sans, sans-serif" font-weight="normal" font-size="21.2" fill="#000" text-anchor="middle" >100000000.00</text>
</g>
<text x="2381.23" y="876.3" font-family="Liberation Serif, serif" font-weight="bold" font-size="38.17" fill="#ff1428" textLength="247.32" lengthAdjust="spacingAndGlyphs" >Frequency [Hz]</text>
<text transform="translate(1702.5 638.5) rotate(-90)" font-family="Liberation Serif, serif" font-weight="bold" font-size="37.7" fill="#ff1428" textLength="148" lengthAdjust="spacingAndGlyphs">Gain [db]</text>
<rect x="2988" y="274.4" width="292" height="123.2" fill="#c4c4c4" />
<rect x="2988" y="274.4" width="20" height="123.2" fill="url(#g89)" />
<rect x="2988" y="274.4" width="278" height="3.2" fill="#d0d0d0" />
<rect x="3255" y="274.4" width="25" height="123.2" fill="url(#g90)" />
<rect x="2988" y="394.6" width="292" height="3" fill="url(#g91)" />
<text transform="translate(3017 300.9) scale(1.05 1)" font-family="Liberation Sans, sans-serif" font-weight="normal" font-size="20.6" fill="#000" text-anchor="start" >Gain</text>
<rect x="3204.2" y="278" width="49.9" height="32.6" fill="#767676" />
<rect x="3206" y="279.8" width="47.5" height="29.8" fill="#000" />
<path d="M3209.4 304.1V284.7H3230V301.6H3250.1V284" fill="none" stroke="#ffffff" stroke-width="3.2"/>
<text transform="translate(3017 342.5) scale(1.05 1)" font-family="Liberation Sans, sans-serif" font-weight="normal" font-size="20.6" fill="#000" text-anchor="start" >Stability domain</text>
<rect x="3204.2" y="319.7" width="49.9" height="31.6" fill="#767676" />
<rect x="3206" y="321.5" width="47.5" height="28.8" fill="#000" />
<path d="M3209.6 345.8V326.7H3233.7V343H3252.1" fill="none" stroke="#ff4040" stroke-width="4.6"/>
<text transform="translate(3017 383.5) scale(1.05 1)" font-family="Liberation Sans, sans-serif" font-weight="normal" font-size="20.6" fill="#000" text-anchor="start" >Pozition</text>
<rect x="3204.2" y="360.7" width="49.9" height="32.2" fill="#767676" />
<rect x="3206" y="362.5" width="47.5" height="29.4" fill="#000" />
<path d="M3209.6 387.4V367.7H3233.7V384.6H3252.1" fill="none" stroke="#00ff00" stroke-width="4.6"/>
<rect x="1627.5" y="950" width="1652.5" height="600" fill="#c4c4c4" />
<rect x="1627.5" y="950" width="22" height="596" fill="url(#g92)" />
<rect x="1627.5" y="950" width="1632.5" height="4" fill="#dadada" />
<rect x="3255" y="950" width="25" height="600" fill="url(#g93)" />
<rect x="1627.5" y="1545" width="1652.5" height="5" fill="url(#g94)" />
<rect x="1788.4" y="964.9" width="1451.1" height="494.9" fill="#e2e2e2" />
<rect x="1788.4" y="964.9" width="1449.1" height="493.1" fill="#555555" />
<rect x="1790.2" y="966.5" width="1447.3" height="491.5" fill="#000" />
<g clip-path="url(#c95)">
<path d="M1791.3 979.56H3236.25M1791.3 991.81H3236.25M1791.3 1004.07H3236.25M1791.3 1016.33H3236.25M1791.3 1040.85H3236.25M1791.3 1053.1H3236.25M1791.3 1065.36H3236.25M1791.3 1077.62H3236.25M1791.3 1102.13H3236.25M1791.3 1114.39H3236.25M1791.3 1126.65H3236.25M1791.3 1138.9H3236.25M1791.3 1163.42H3236.25M1791.3 1175.68H3236.25M1791.3 1187.93H3236.25M1791.3 1200.19H3236.25M1791.3 1224.71H3236.25M1791.3 1236.96H3236.25M1791.3 1249.22H3236.25M1791.3 1261.48H3236.25M1791.3 1285.99H3236.25M1791.3 1298.25H3236.25M1791.3 1310.51H3236.25M1791.3 1322.77H3236.25M1791.3 1347.28H3236.25M1791.3 1359.54H3236.25M1791.3 1371.8H3236.25M1791.3 1384.05H3236.25M1791.3 1408.57H3236.25M1791.3 1420.83H3236.25M1791.3 1433.09H3236.25M1791.3 1445.34H3236.25M1834.8 967.3V1457.6M1860.24 967.3V1457.6M1878.29 967.3V1457.6M1892.3 967.3V1457.6M1903.74 967.3V1457.6M1913.41 967.3V1457.6M1921.79 967.3V1457.6M1929.18 967.3V1457.6M1979.29 967.3V1457.6M2004.74 967.3V1457.6M2022.79 967.3V1457.6M2036.79 967.3V1457.6M2048.23 967.3V1457.6M2057.91 967.3V1457.6M2066.29 967.3V1457.6M2073.68 967.3V1457.6M2123.79 967.3V1457.6M2149.23 967.3V1457.6M2167.28 967.3V1457.6M2181.29 967.3V1457.6M2192.73 967.3V1457.6M2202.4 967.3V1457.6M2210.78 967.3V1457.6M2218.17 967.3V1457.6M2268.28 967.3V1457.6M2293.73 967.3V1457.6M2311.78 967.3V1457.6M2325.78 967.3V1457.6M2337.22 967.3V1457.6M2346.9 967.3V1457.6M2355.28 967.3V1457.6M2362.67 967.3V1457.6M2412.78 967.3V1457.6M2438.22 967.3V1457.6M2456.27 967.3V1457.6M2470.28 967.3V1457.6M2481.72 967.3V1457.6M2491.39 967.3V1457.6M2499.77 967.3V1457.6M2507.16 967.3V1457.6M2557.27 967.3V1457.6M2582.72 967.3V1457.6M2600.77 967.3V1457.6M2614.77 967.3V1457.6M2626.21 967.3V1457.6M2635.89 967.3V1457.6M2644.27 967.3V1457.6M2651.66 967.3V1457.6M2701.77 967.3V1457.6M2727.21 967.3V1457.6M2745.26 967.3V1457.6M2759.27 967.3V1457.6M2770.71 967.3V1457.6M2780.38 967.3V1457.6M2788.76 967.3V1457.6M2796.15 967.3V1457.6M2846.26 967.3V1457.6M2871.71 967.3V1457.6M2889.76 967.3V1457.6M2903.76 967.3V1457.6M2915.2 967.3V1457.6M2924.88 967.3V1457.6M2933.26 967.3V1457.6M2940.65 967.3V1457.6M2990.76 967.3V1457.6M3016.2 967.3V1457.6M3034.25 967.3V1457.6M3048.26 967.3V1457.6M3059.7 967.3V1457.6M3069.37 967.3V1457.6M3077.75 967.3V1457.6M3085.14 967.3V1457.6M3135.25 967.3V1457.6M3160.7 967.3V1457.6M3178.75 967.3V1457.6M3192.75 967.3V1457.6M3204.19 967.3V1457.6M3213.87 967.3V1457.6M3222.25 967.3V1457.6M3229.64 967.3V1457.6" stroke="#5e6614" stroke-width="1.3" fill="none"/>
<path d="M1791.3 1028.59H3236.25M1791.3 1089.88H3236.25M1791.3 1151.16H3236.25M1791.3 1212.45H3236.25M1791.3 1273.74H3236.25M1791.3 1335.02H3236.25M1791.3 1396.31H3236.25M1935.8 967.3V1457.6M2080.29 967.3V1457.6M2224.78 967.3V1457.6M2369.28 967.3V1457.6M2513.78 967.3V1457.6M2658.27 967.3V1457.6M2802.76 967.3V1457.6M2947.26 967.3V1457.6M3091.76 967.3V1457.6" stroke="#909c10" stroke-width="1.5" fill="none"/>
<path d="M1790.2 1432.6H3237.5" fill="none" stroke="#00ff00" stroke-width="7.6"/>
<path d="M2334.3 1329.01V1431.6H3022.6V1101.87" fill="none" stroke="#ff4040" stroke-width="5.6"/>
<path d="M1791.2 1214.78 L1794.2 1214.78 L1797.2 1214.78 L1800.2 1214.78 L1803.2 1214.78 L1806.2 1214.79 L1809.2 1214.79 L1812.2 1214.79 L1815.2 1214.79 L1818.2 1214.79 L1821.2 1214.79 L1824.2 1214.8 L1827.2 1214.8 L1830.2 1214.8 L1833.2 1214.8 L1836.2 1214.81 L1839.2 1214.81 L1842.2 1214.81 L1845.2 1214.81 L1848.2 1214.82 L1851.2 1214.82 L1854.2 1214.82 L1857.2 1214.83 L1860.2 1214.83 L1863.2 1214.83 L1866.2 1214.84 L1869.2 1214.84 L1872.2 1214.85 L1875.2 1214.85 L1878.2 1214.86 L1881.2 1214.86 L1884.2 1214.87 L1887.2 1214.87 L1890.2 1214.88 L1893.2 1214.88 L1896.2 1214.89 L1899.2 1214.9 L1902.2 1214.9 L1905.2 1214.91 L1908.2 1214.92 L1911.2 1214.93 L1914.2 1214.94 L1917.2 1214.94 L1920.2 1214.95 L1923.2 1214.96 L1926.2 1214.97 L1929.2 1214.98 L1932.2 1215 L1935.2 1215.01 L1938.2 1215.02 L1941.2 1215.03 L1944.2 1215.05 L1947.2 1215.06 L1950.2 1215.08 L1953.2 1215.09 L1956.2 1215.11 L1959.2 1215.13 L1962.2 1215.14 L1965.2 1215.16 L1968.2 1215.18 L1971.2 1215.21 L1974.2 1215.23 L1977.2 1215.25 L1980.2 1215.27 L1983.2 1215.3 L1986.2 1215.33 L1989.2 1215.36 L1992.2 1215.38 L1995.2 1215.42 L1998.2 1215.45 L2001.2 1215.48 L2004.2 1215.52 L2007.2 1215.56 L2010.2 1215.59 L2013.2 1215.64 L2016.2 1215.68 L2019.2 1215.72 L2022.2 1215.77 L2025.2 1215.82 L2028.2 1215.87 L2031.2 1215.93 L2034.2 1215.99 L2037.2 1216.05 L2040.2 1216.11 L2043.2 1216.18 L2046.2 1216.25 L2049.2 1216.32 L2052.2 1216.4 L2055.2 1216.48 L2058.2 1216.56 L2061.2 1216.65 L2064.2 1216.74 L2067.2 1216.84 L2070.2 1216.94 L2073.2 1217.05 L2076.2 1217.16 L2079.2 1217.28 L2082.2 1217.4 L2085.2 1217.53 L2088.2 1217.67 L2091.2 1217.81 L2094.2 1217.96 L2097.2 1218.12 L2100.2 1218.28 L2103.2 1218.46 L2106.2 1218.64 L2109.2 1218.83 L2112.2 1219.03 L2115.2 1219.24 L2118.2 1219.46 L2121.2 1219.69 L2124.2 1219.93 L2127.2 1220.18 L2130.2 1220.45 L2133.2 1220.72 L2136.2 1221.02 L2139.2 1221.32 L2142.2 1221.64 L2145.2 1221.98 L2148.2 1222.33 L2151.2 1222.7 L2154.2 1223.09 L2157.2 1223.5 L2160.2 1223.93 L2163.2 1224.38 L2166.2 1224.84 L2169.2 1225.34 L2172.2 1225.85 L2175.2 1226.39 L2178.2 1226.96 L2181.2 1227.56 L2184.2 1228.18 L2187.2 1228.83 L2190.2 1229.52 L2193.2 1230.23 L2196.2 1230.99 L2199.2 1231.77 L2202.2 1232.6 L2205.2 1233.46 L2208.2 1234.37 L2211.2 1235.31 L2214.2 1236.3 L2217.2 1237.34 L2220.2 1238.43 L2223.2 1239.56 L2226.2 1240.75 L2229.2 1241.99 L2232.2 1243.29 L2235.2 1244.64 L2238.2 1246.06 L2241.2 1247.54 L2244.2 1249.08 L2247.2 1250.69 L2250.2 1252.37 L2253.2 1254.12 L2256.2 1255.94 L2259.2 1257.83 L2262.2 1259.8 L2265.2 1261.84 L2268.2 1263.97 L2271.2 1266.17 L2274.2 1268.45 L2277.2 1270.81 L2280.2 1273.25 L2283.2 1275.77 L2286.2 1278.37 L2289.2 1281.04 L2292.2 1283.79 L2295.2 1286.62 L2298.2 1289.51 L2301.2 1292.47 L2304.2 1295.5 L2307.2 1298.58 L2310.2 1301.72 L2313.2 1304.9 L2316.2 1308.13 L2319.2 1311.39 L2322.2 1314.68 L2325.2 1317.99 L2328.2 1321.32 L2331.2 1324.65 L2334.2 1327.99 L2337.2 1331.31 L2340.2 1334.62 L2343.2 1337.91 L2346.2 1341.16 L2349.2 1344.38 L2352.2 1347.56 L2355.2 1350.68 L2358.2 1353.75 L2361.2 1356.77 L2364.2 1359.71 L2367.2 1362.6 L2370.2 1365.4 L2373.2 1368.14 L2376.2 1370.8 L2379.2 1373.38 L2382.2 1375.89 L2385.2 1378.31 L2388.2 1380.66 L2391.2 1382.93 L2394.2 1385.11 L2397.2 1387.22 L2400.2 1389.25 L2403.2 1391.2 L2406.2 1393.08 L2409.2 1394.89 L2412.2 1396.62 L2415.2 1398.29 L2418.2 1399.88 L2421.2 1401.41 L2424.2 1402.88 L2427.2 1404.29 L2430.2 1405.63 L2433.2 1406.92 L2436.2 1408.15 L2439.2 1409.32 L2442.2 1410.45 L2445.2 1411.53 L2448.2 1412.55 L2451.2 1413.54 L2454.2 1414.48 L2457.2 1415.37 L2460.2 1416.23 L2463.2 1417.04 L2466.2 1417.83 L2469.2 1418.57 L2472.2 1419.28 L2475.2 1419.96 L2478.2 1420.61 L2481.2 1421.22 L2484.2 1421.81 L2487.2 1422.37 L2490.2 1422.91 L2493.2 1423.42 L2496.2 1423.91 L2499.2 1424.38 L2502.2 1424.82 L2505.2 1425.24 L2508.2 1425.65 L2511.2 1426.03 L2514.2 1426.4 L2517.2 1426.75 L2520.2 1427.08 L2523.2 1427.4 L2526.2 1427.7 L2529.2 1427.99 L2532.2 1428.27 L2535.2 1428.53 L2538.2 1428.78 L2541.2 1429.02 L2544.2 1429.25 L2547.2 1429.47 L2550.2 1429.67 L2553.2 1429.87 L2556.2 1430.06 L2559.2 1430.24 L2562.2 1430.41 L2565.2 1430.57 L2568.2 1430.73 L2571.2 1430.88 L2574.2 1431.02 L2577.2 1431.16 L2580.2 1431.28 L2583.2 1431.41 L2586.2 1431.52 L2589.2 1431.63 L2592.2 1431.74 L2595.2 1431.84 L2598.2 1431.94 L2601.2 1432.03 L2604.2 1432.12 L2607.2 1432.2 L2610.2 1432.28 L2613.2 1432.36 L2616.2 1432.43 L2619.2 1432.5 L2622.2 1432.56 L2625.2 1432.63 L2628.2 1432.69 L2631.2 1432.74 L2634.2 1432.8 L2637.2 1432.85 L2640.2 1432.9 L2643.2 1432.95 L2646.2 1432.99 L2649.2 1433.04 L2652.2 1433.08 L2655.2 1433.11 L2658.2 1433.15 L2661.2 1433.19 L2664.2 1433.22 L2667.2 1433.25 L2670.2 1433.28 L2673.2 1433.31 L2676.2 1433.34 L2679.2 1433.37 L2681 994.57 L2684 994.6 L2687 994.63 L2690 994.66 L2693 994.7 L2696 994.73 L2699 994.77 L2702 994.8 L2705 994.84 L2708 994.89 L2711 994.93 L2714 994.98 L2717 995.02 L2720 995.07 L2723 995.13 L2726 995.18 L2729 995.24 L2732 995.3 L2735 995.36 L2738 995.43 L2741 995.5 L2744 995.58 L2747 995.65 L2750 995.73 L2753 995.82 L2756 995.91 L2759 996 L2762 996.1 L2765 996.2 L2768 996.31 L2771 996.42 L2774 996.54 L2777 996.67 L2780 996.8 L2783 996.94 L2786 997.08 L2789 997.23 L2792 997.39 L2795 997.56 L2798 997.73 L2801 997.91 L2804 998.1 L2807 998.31 L2810 998.52 L2813 998.74 L2816 998.97 L2819 999.21 L2822 999.47 L2825 999.74 L2828 1000.02 L2831 1000.31 L2834 1000.62 L2837 1000.94 L2840 1001.28 L2843 1001.64 L2846 1002.01 L2849 1002.41 L2852 1002.82 L2855 1003.25 L2858 1003.7 L2861 1004.17 L2864 1004.67 L2867 1005.19 L2870 1005.73 L2873 1006.31 L2876 1006.91 L2879 1007.53 L2882 1008.19 L2885 1008.88 L2888 1009.61 L2891 1010.36 L2894 1011.16 L2897 1011.99 L2900 1012.86 L2903 1013.77 L2906 1014.73 L2909 1015.73 L2912 1016.77 L2915 1017.87 L2918 1019.01 L2921 1020.21 L2924 1021.46 L2927 1022.77 L2930 1024.14 L2933 1025.56 L2936 1027.05 L2939 1028.61 L2942 1030.23 L2945 1031.92 L2948 1033.69 L2951 1035.52 L2954 1037.43 L2957 1039.41 L2960 1041.48 L2963 1043.62 L2966 1045.84 L2969 1048.13 L2972 1050.51 L2975 1052.97 L2978 1055.51 L2981 1058.13 L2984 1060.83 L2987 1063.6 L2990 1066.44 L2993 1069.36 L2996 1072.34 L2999 1075.39 L3002 1078.5 L3005 1081.65 L3008 1084.86 L3011 1088.11 L3014 1091.4 L3017 1094.71 L3020 1098.05 L3023 1101.4 L3026 1104.75 L3029 1108.11 L3032 1111.46 L3035 1114.79 L3038 1118.09 L3041 1121.37 L3044 1124.61 L3047 1127.8 L3050 1130.95 L3053 1134.04 L3056 1137.07 L3059 1140.04 L3062 1142.93 L3065 1145.76 L3068 1148.51 L3071 1151.19 L3074 1153.79 L3077 1156.3 L3080 1158.74 L3083 1161.1 L3086 1163.38 L3089 1165.58 L3092 1167.7 L3095 1169.74 L3098 1171.7 L3101 1173.59 L3104 1175.41 L3107 1177.15 L3110 1178.83 L3113 1180.43 L3116 1181.97 L3119 1183.44 L3122 1184.85 L3125 1186.21 L3128 1187.5 L3131 1188.74 L3134 1189.92 L3137 1191.05 L3140 1192.13 L3143 1193.17 L3146 1194.15 L3149 1195.1 L3152 1196 L3155 1196.86 L3158 1197.68 L3161 1198.46 L3164 1199.21 L3167 1199.93 L3170 1200.61 L3173 1201.26 L3176 1201.88 L3179 1202.47 L3182 1203.04 L3185 1203.58 L3188 1204.09 L3191 1204.58 L3194 1205.05 L3197 1205.49 L3200 1205.92 L3203 1206.32 L3206 1206.71 L3209 1207.08 L3212 1207.43 L3215 1207.77 L3218 1208.09 L3221 1208.39 L3224 1208.68 L3227 1208.96 L3230 1209.23 L3233 1209.48 L3236 1209.72 L3238.5 1209.91" fill="none" stroke="#ffb0a0" stroke-width="3" opacity="0.8"/>
<path d="M1790.2 1213.58 L1793.2 1213.58 L1796.2 1213.58 L1799.2 1213.58 L1802.2 1213.58 L1805.2 1213.59 L1808.2 1213.59 L1811.2 1213.59 L1814.2 1213.59 L1817.2 1213.59 L1820.2 1213.59 L1823.2 1213.6 L1826.2 1213.6 L1829.2 1213.6 L1832.2 1213.6 L1835.2 1213.61 L1838.2 1213.61 L1841.2 1213.61 L1844.2 1213.61 L1847.2 1213.62 L1850.2 1213.62 L1853.2 1213.62 L1856.2 1213.63 L1859.2 1213.63 L1862.2 1213.63 L1865.2 1213.64 L1868.2 1213.64 L1871.2 1213.65 L1874.2 1213.65 L1877.2 1213.66 L1880.2 1213.66 L1883.2 1213.67 L1886.2 1213.67 L1889.2 1213.68 L1892.2 1213.68 L1895.2 1213.69 L1898.2 1213.7 L1901.2 1213.7 L1904.2 1213.71 L1907.2 1213.72 L1910.2 1213.73 L1913.2 1213.74 L1916.2 1213.74 L1919.2 1213.75 L1922.2 1213.76 L1925.2 1213.77 L1928.2 1213.78 L1931.2 1213.8 L1934.2 1213.81 L1937.2 1213.82 L1940.2 1213.83 L1943.2 1213.85 L1946.2 1213.86 L1949.2 1213.88 L1952.2 1213.89 L1955.2 1213.91 L1958.2 1213.93 L1961.2 1213.94 L1964.2 1213.96 L1967.2 1213.98 L1970.2 1214.01 L1973.2 1214.03 L1976.2 1214.05 L1979.2 1214.07 L1982.2 1214.1 L1985.2 1214.13 L1988.2 1214.16 L1991.2 1214.18 L1994.2 1214.22 L1997.2 1214.25 L2000.2 1214.28 L2003.2 1214.32 L2006.2 1214.36 L2009.2 1214.39 L2012.2 1214.44 L2015.2 1214.48 L2018.2 1214.52 L2021.2 1214.57 L2024.2 1214.62 L2027.2 1214.67 L2030.2 1214.73 L2033.2 1214.79 L2036.2 1214.85 L2039.2 1214.91 L2042.2 1214.98 L2045.2 1215.05 L2048.2 1215.12 L2051.2 1215.2 L2054.2 1215.28 L2057.2 1215.36 L2060.2 1215.45 L2063.2 1215.54 L2066.2 1215.64 L2069.2 1215.74 L2072.2 1215.85 L2075.2 1215.96 L2078.2 1216.08 L2081.2 1216.2 L2084.2 1216.33 L2087.2 1216.47 L2090.2 1216.61 L2093.2 1216.76 L2096.2 1216.92 L2099.2 1217.08 L2102.2 1217.26 L2105.2 1217.44 L2108.2 1217.63 L2111.2 1217.83 L2114.2 1218.04 L2117.2 1218.26 L2120.2 1218.49 L2123.2 1218.73 L2126.2 1218.98 L2129.2 1219.25 L2132.2 1219.52 L2135.2 1219.82 L2138.2 1220.12 L2141.2 1220.44 L2144.2 1220.78 L2147.2 1221.13 L2150.2 1221.5 L2153.2 1221.89 L2156.2 1222.3 L2159.2 1222.73 L2162.2 1223.18 L2165.2 1223.64 L2168.2 1224.14 L2171.2 1224.65 L2174.2 1225.19 L2177.2 1225.76 L2180.2 1226.36 L2183.2 1226.98 L2186.2 1227.63 L2189.2 1228.32 L2192.2 1229.03 L2195.2 1229.79 L2198.2 1230.57 L2201.2 1231.4 L2204.2 1232.26 L2207.2 1233.17 L2210.2 1234.11 L2213.2 1235.1 L2216.2 1236.14 L2219.2 1237.23 L2222.2 1238.36 L2225.2 1239.55 L2228.2 1240.79 L2231.2 1242.09 L2234.2 1243.44 L2237.2 1244.86 L2240.2 1246.34 L2243.2 1247.88 L2246.2 1249.49 L2249.2 1251.17 L2252.2 1252.92 L2255.2 1254.74 L2258.2 1256.63 L2261.2 1258.6 L2264.2 1260.64 L2267.2 1262.77 L2270.2 1264.97 L2273.2 1267.25 L2276.2 1269.61 L2279.2 1272.05 L2282.2 1274.57 L2285.2 1277.17 L2288.2 1279.84 L2291.2 1282.59 L2294.2 1285.42 L2297.2 1288.31 L2300.2 1291.27 L2303.2 1294.3 L2306.2 1297.38 L2309.2 1300.52 L2312.2 1303.7 L2315.2 1306.93 L2318.2 1310.19 L2321.2 1313.48 L2324.2 1316.79 L2327.2 1320.12 L2330.2 1323.45 L2333.2 1326.79 L2336.2 1330.11 L2339.2 1333.42 L2342.2 1336.71 L2345.2 1339.96 L2348.2 1343.18 L2351.2 1346.36 L2354.2 1349.48 L2357.2 1352.55 L2360.2 1355.57 L2363.2 1358.51 L2366.2 1361.4 L2369.2 1364.2 L2372.2 1366.94 L2375.2 1369.6 L2378.2 1372.18 L2381.2 1374.69 L2384.2 1377.11 L2387.2 1379.46 L2390.2 1381.73 L2393.2 1383.91 L2396.2 1386.02 L2399.2 1388.05 L2402.2 1390 L2405.2 1391.88 L2408.2 1393.69 L2411.2 1395.42 L2414.2 1397.09 L2417.2 1398.68 L2420.2 1400.21 L2423.2 1401.68 L2426.2 1403.09 L2429.2 1404.43 L2432.2 1405.72 L2435.2 1406.95 L2438.2 1408.12 L2441.2 1409.25 L2444.2 1410.33 L2447.2 1411.35 L2450.2 1412.34 L2453.2 1413.28 L2456.2 1414.17 L2459.2 1415.03 L2462.2 1415.84 L2465.2 1416.63 L2468.2 1417.37 L2471.2 1418.08 L2474.2 1418.76 L2477.2 1419.41 L2480.2 1420.02 L2483.2 1420.61 L2486.2 1421.17 L2489.2 1421.71 L2492.2 1422.22 L2495.2 1422.71 L2498.2 1423.18 L2501.2 1423.62 L2504.2 1424.04 L2507.2 1424.45 L2510.2 1424.83 L2513.2 1425.2 L2516.2 1425.55 L2519.2 1425.88 L2522.2 1426.2 L2525.2 1426.5 L2528.2 1426.79 L2531.2 1427.07 L2534.2 1427.33 L2537.2 1427.58 L2540.2 1427.82 L2543.2 1428.05 L2546.2 1428.27 L2549.2 1428.47 L2552.2 1428.67 L2555.2 1428.86 L2558.2 1429.04 L2561.2 1429.21 L2564.2 1429.37 L2567.2 1429.53 L2570.2 1429.68 L2573.2 1429.82 L2576.2 1429.96 L2579.2 1430.08 L2582.2 1430.21 L2585.2 1430.32 L2588.2 1430.43 L2591.2 1430.54 L2594.2 1430.64 L2597.2 1430.74 L2600.2 1430.83 L2603.2 1430.92 L2606.2 1431 L2609.2 1431.08 L2612.2 1431.16 L2615.2 1431.23 L2618.2 1431.3 L2621.2 1431.36 L2624.2 1431.43 L2627.2 1431.49 L2630.2 1431.54 L2633.2 1431.6 L2636.2 1431.65 L2639.2 1431.7 L2642.2 1431.75 L2645.2 1431.79 L2648.2 1431.84 L2651.2 1431.88 L2654.2 1431.91 L2657.2 1431.95 L2660.2 1431.99 L2663.2 1432.02 L2666.2 1432.05 L2669.2 1432.08 L2672.2 1432.11 L2675.2 1432.14 L2678.2 1432.17 L2680 993.37 L2683 993.4 L2686 993.43 L2689 993.46 L2692 993.5 L2695 993.53 L2698 993.57 L2701 993.6 L2704 993.64 L2707 993.69 L2710 993.73 L2713 993.78 L2716 993.82 L2719 993.87 L2722 993.93 L2725 993.98 L2728 994.04 L2731 994.1 L2734 994.16 L2737 994.23 L2740 994.3 L2743 994.38 L2746 994.45 L2749 994.53 L2752 994.62 L2755 994.71 L2758 994.8 L2761 994.9 L2764 995 L2767 995.11 L2770 995.22 L2773 995.34 L2776 995.47 L2779 995.6 L2782 995.74 L2785 995.88 L2788 996.03 L2791 996.19 L2794 996.36 L2797 996.53 L2800 996.71 L2803 996.9 L2806 997.11 L2809 997.32 L2812 997.54 L2815 997.77 L2818 998.01 L2821 998.27 L2824 998.54 L2827 998.82 L2830 999.11 L2833 999.42 L2836 999.74 L2839 1000.08 L2842 1000.44 L2845 1000.81 L2848 1001.21 L2851 1001.62 L2854 1002.05 L2857 1002.5 L2860 1002.97 L2863 1003.47 L2866 1003.99 L2869 1004.53 L2872 1005.11 L2875 1005.71 L2878 1006.33 L2881 1006.99 L2884 1007.68 L2887 1008.41 L2890 1009.16 L2893 1009.96 L2896 1010.79 L2899 1011.66 L2902 1012.57 L2905 1013.53 L2908 1014.53 L2911 1015.57 L2914 1016.67 L2917 1017.81 L2920 1019.01 L2923 1020.26 L2926 1021.57 L2929 1022.94 L2932 1024.36 L2935 1025.85 L2938 1027.41 L2941 1029.03 L2944 1030.72 L2947 1032.49 L2950 1034.32 L2953 1036.23 L2956 1038.21 L2959 1040.28 L2962 1042.42 L2965 1044.64 L2968 1046.93 L2971 1049.31 L2974 1051.77 L2977 1054.31 L2980 1056.93 L2983 1059.63 L2986 1062.4 L2989 1065.24 L2992 1068.16 L2995 1071.14 L2998 1074.19 L3001 1077.3 L3004 1080.45 L3007 1083.66 L3010 1086.91 L3013 1090.2 L3016 1093.51 L3019 1096.85 L3022 1100.2 L3025 1103.55 L3028 1106.91 L3031 1110.26 L3034 1113.59 L3037 1116.89 L3040 1120.17 L3043 1123.41 L3046 1126.6 L3049 1129.75 L3052 1132.84 L3055 1135.87 L3058 1138.84 L3061 1141.73 L3064 1144.56 L3067 1147.31 L3070 1149.99 L3073 1152.59 L3076 1155.1 L3079 1157.54 L3082 1159.9 L3085 1162.18 L3088 1164.38 L3091 1166.5 L3094 1168.54 L3097 1170.5 L3100 1172.39 L3103 1174.21 L3106 1175.95 L3109 1177.63 L3112 1179.23 L3115 1180.77 L3118 1182.24 L3121 1183.65 L3124 1185.01 L3127 1186.3 L3130 1187.54 L3133 1188.72 L3136 1189.85 L3139 1190.93 L3142 1191.97 L3145 1192.95 L3148 1193.9 L3151 1194.8 L3154 1195.66 L3157 1196.48 L3160 1197.26 L3163 1198.01 L3166 1198.73 L3169 1199.41 L3172 1200.06 L3175 1200.68 L3178 1201.27 L3181 1201.84 L3184 1202.38 L3187 1202.89 L3190 1203.38 L3193 1203.85 L3196 1204.29 L3199 1204.72 L3202 1205.12 L3205 1205.51 L3208 1205.88 L3211 1206.23 L3214 1206.57 L3217 1206.89 L3220 1207.19 L3223 1207.48 L3226 1207.76 L3229 1208.03 L3232 1208.28 L3235 1208.52 L3237.5 1208.71" fill="none" stroke="#fff" stroke-width="3.6" stroke-linejoin="round"/>
</g>
<text transform="translate(1774.4 974.9) scale(0.915 1)" font-family="Liberation Sans, sans-serif" font-weight="normal" font-size="21.2" fill="#000" text-anchor="end" >200.0</text>
<line x1="1778" y1="967.3" x2="1786.9" y2="967.3" stroke="#000" stroke-width="2" />
<text transform="translate(1774.4 1036.19) scale(0.915 1)" font-family="Liberation Sans, sans-serif" font-weight="normal" font-size="21.2" fill="#000" text-anchor="end" >150.0</text>
<line x1="1778" y1="1028.59" x2="1786.9" y2="1028.59" stroke="#000" stroke-width="2" />
<text transform="translate(1774.4 1097.47) scale(0.915 1)" font-family="Liberation Sans, sans-serif" font-weight="normal" font-size="21.2" fill="#000" text-anchor="end" >100.0</text>
<line x1="1778" y1="1089.88" x2="1786.9" y2="1089.88" stroke="#000" stroke-width="2" />
<text transform="translate(1774.4 1158.76) scale(0.915 1)" font-family="Liberation Sans, sans-serif" font-weight="normal" font-size="21.2" fill="#000" text-anchor="end" >50.0</text>
<line x1="1778" y1="1151.16" x2="1786.9" y2="1151.16" stroke="#000" stroke-width="2" />
<text transform="translate(1774.4 1220.05) scale(0.915 1)" font-family="Liberation Sans, sans-serif" font-weight="normal" font-size="21.2" fill="#000" text-anchor="end" >0.0</text>
<line x1="1778" y1="1212.45" x2="1786.9" y2="1212.45" stroke="#000" stroke-width="2" />
<text transform="translate(1774.4 1281.34) scale(0.915 1)" font-family="Liberation Sans, sans-serif" font-weight="normal" font-size="21.2" fill="#000" text-anchor="end" >50.0</text>
<line x1="1729.15" y1="1274.54" x2="1734.45" y2="1274.54" stroke="#000" stroke-width="2" />
<line x1="1778" y1="1273.74" x2="1786.9" y2="1273.74" stroke="#000" stroke-width="2" />
<text transform="translate(1774.4 1342.62) scale(0.915 1)" font-family="Liberation Sans, sans-serif" font-weight="normal" font-size="21.2" fill="#000" text-anchor="end" >100.0</text>
<line x1="1718.37" y1="1335.83" x2="1723.67" y2="1335.83" stroke="#000" stroke-width="2" />
<line x1="1778" y1="1335.03" x2="1786.9" y2="1335.03" stroke="#000" stroke-width="2" />
<text transform="translate(1774.4 1403.91) scale(0.915 1)" font-family="Liberation Sans, sans-serif" font-weight="normal" font-size="21.2" fill="#000" text-anchor="end" >150.0</text>
<line x1="1718.37" y1="1397.11" x2="1723.67" y2="1397.11" stroke="#000" stroke-width="2" />
<line x1="1778" y1="1396.31" x2="1786.9" y2="1396.31" stroke="#000" stroke-width="2" />
<text transform="translate(1774.4 1465.2) scale(0.915 1)" font-family="Liberation Sans, sans-serif" font-weight="normal" font-size="21.2" fill="#000" text-anchor="end" >200.0</text>
<line x1="1718.37" y1="1458.4" x2="1723.67" y2="1458.4" stroke="#000" stroke-width="2" />
<line x1="1778" y1="1457.6" x2="1786.9" y2="1457.6" stroke="#000" stroke-width="2" />
<g clip-path="url(#c96)">
<line x1="1791.3" y1="1462" x2="1791.3" y2="1470" stroke="#000" stroke-width="1.6" />
<text transform="translate(1789.8 1491.9) scale(0.915 1)" font-family="Liberation Sans, sans-serif" font-weight="normal" font-size="21.2" fill="#000" text-anchor="middle" >0.01</text>
<line x1="1935.8" y1="1462" x2="1935.8" y2="1470" stroke="#000" stroke-width="1.6" />
<text transform="translate(1934.3 1491.9) scale(0.915 1)" font-family="Liberation Sans, sans-serif" font-weight="normal" font-size="21.2" fill="#000" text-anchor="middle" >0.10</text>
<line x1="2080.29" y1="1462" x2="2080.29" y2="1470" stroke="#000" stroke-width="1.6" />
<text transform="translate(2078.79 1491.9) scale(0.915 1)" font-family="Liberation Sans, sans-serif" font-weight="normal" font-size="21.2" fill="#000" text-anchor="middle" >1.00</text>
<line x1="2224.78" y1="1462" x2="2224.78" y2="1470" stroke="#000" stroke-width="1.6" />
<text transform="translate(2223.28 1491.9) scale(0.915 1)" font-family="Liberation Sans, sans-serif" font-weight="normal" font-size="21.2" fill="#000" text-anchor="middle" >10.00</text>
<line x1="2369.28" y1="1462" x2="2369.28" y2="1470" stroke="#000" stroke-width="1.6" />
<text transform="translate(2367.78 1491.9) scale(0.915 1)" font-family="Liberation Sans, sans-serif" font-weight="normal" font-size="21.2" fill="#000" text-anchor="middle" >100.00</text>
<line x1="2513.78" y1="1462" x2="2513.78" y2="1470" stroke="#000" stroke-width="1.6" />
<text transform="translate(2512.28 1491.9) scale(0.915 1)" font-family="Liberation Sans, sans-serif" font-weight="normal" font-size="21.2" fill="#000" text-anchor="middle" >1000.00</text>
<line x1="2658.27" y1="1462" x2="2658.27" y2="1470" stroke="#000" stroke-width="1.6" />
<text transform="translate(2656.77 1491.9) scale(0.915 1)" font-family="Liberation Sans, sans-serif" font-weight="normal" font-size="21.2" fill="#000" text-anchor="middle" >10000.00</text>
<line x1="2802.76" y1="1462" x2="2802.76" y2="1470" stroke="#000" stroke-width="1.6" />
<text transform="translate(2801.26 1491.9) scale(0.915 1)" font-family="Liberation Sans, sans-serif" font-weight="normal" font-size="21.2" fill="#000" text-anchor="middle" >100000.00</text>
<line x1="2947.26" y1="1462" x2="2947.26" y2="1470" stroke="#000" stroke-width="1.6" />
<text transform="translate(2945.76 1491.9) scale(0.915 1)" font-family="Liberation Sans, sans-serif" font-weight="normal" font-size="21.2" fill="#000" text-anchor="middle" >1000000.00</text>
<line x1="3091.76" y1="1462" x2="3091.76" y2="1470" stroke="#000" stroke-width="1.6" />
<text transform="translate(3090.26 1491.9) scale(0.915 1)" font-family="Liberation Sans, sans-serif" font-weight="normal" font-size="21.2" fill="#000" text-anchor="middle" >10000000.00</text>
<line x1="3236.25" y1="1462" x2="3236.25" y2="1470" stroke="#000" stroke-width="1.6" />
<text transform="translate(3234.75 1491.9) scale(0.915 1)" font-family="Liberation Sans, sans-serif" font-weight="normal" font-size="21.2" fill="#000" text-anchor="middle" >100000000.00</text>
</g>
<text x="2385.93" y="1535.4" font-family="Liberation Serif, serif" font-weight="bold" font-size="38.17" fill="#ff1428" textLength="246.42" lengthAdjust="spacingAndGlyphs" >Frequency [Hz]</text>
<text transform="translate(1701 1337) rotate(-90)" font-family="Liberation Serif, serif" font-weight="bold" font-size="37.7" fill="#ff1428" textLength="249" lengthAdjust="spacingAndGlyphs">Phase [degrees]</text>
<rect x="2988" y="911.8" width="292" height="123" fill="#c4c4c4" />
<rect x="2988" y="911.8" width="20" height="123" fill="url(#g97)" />
<rect x="2988" y="911.8" width="278" height="3.2" fill="#d0d0d0" />
<rect x="3255" y="911.8" width="25" height="123" fill="url(#g98)" />
<rect x="2988" y="1031.8" width="292" height="3" fill="url(#g99)" />
<text transform="translate(3017 938.8) scale(1.05 1)" font-family="Liberation Sans, sans-serif" font-weight="normal" font-size="20.6" fill="#000" text-anchor="start" >Phase</text>
<rect x="3204.2" y="916.5" width="49.9" height="31.5" fill="#767676" />
<rect x="3206" y="918.3" width="47.5" height="28.7" fill="#000" />
<path d="M3209.4 941.5V923.2H3230V939H3250.1V922.5" fill="none" stroke="#ffffff" stroke-width="3.2"/>
<text transform="translate(3017 980.1) scale(1.05 1)" font-family="Liberation Sans, sans-serif" font-weight="normal" font-size="20.6" fill="#000" text-anchor="start" >Stability domain</text>
<rect x="3204.2" y="957.6" width="49.9" height="30.7" fill="#767676" />
<rect x="3206" y="959.4" width="47.5" height="27.9" fill="#000" />
<path d="M3209.6 982.8V964.6H3233.7V980H3252.1" fill="none" stroke="#ff4040" stroke-width="4.6"/>
<text transform="translate(3017 1021.2) scale(1.05 1)" font-family="Liberation Sans, sans-serif" font-weight="normal" font-size="20.6" fill="#000" text-anchor="start" >Pozition</text>
<rect x="3204.2" y="999" width="49.9" height="31" fill="#767676" />
<rect x="3206" y="1000.8" width="47.5" height="28.2" fill="#000" />
<path d="M3209.6 1024.5V1006H3233.7V1021.7H3252.1" fill="none" stroke="#00ff00" stroke-width="4.6"/>
<g opacity="0.35" fill="#6a6a6a" stroke="#6a6a6a" stroke-width="1.6" stroke-linejoin="round" transform="translate(1.6 1.6)">
<text transform="translate(2993 1595) skewX(-12)" font-family="Liberation Sans, sans-serif" font-weight="bold" font-size="48.5" textLength="237" lengthAdjust="spacingAndGlyphs">NATIONAL</text>
<text transform="translate(2979 1638.8) skewX(-12)" font-family="Liberation Sans, sans-serif" font-weight="bold" font-size="46" textLength="327" lengthAdjust="spacingAndGlyphs">INSTRUMENTS</text>
<path d="M2881 1559 C2900 1554 2928 1556 2942 1567 L2975 1615 C2956 1621 2940 1629 2930 1640 L2916 1651.6 L2899 1651.6 C2903 1632 2912 1616 2924 1604 C2914 1589 2900 1572 2881 1559 Z"/>
<path d="M2944 1574 C2956 1565 2972 1560 2991 1559 C2977 1573 2969 1587 2963 1599 L2953 1585 Z"/>
</g>
<g opacity="0.7" fill="#e6e6e6" stroke="#e6e6e6" stroke-width="1.6" stroke-linejoin="round" transform="translate(0 0)">
<text transform="translate(2993 1595) skewX(-12)" font-family="Liberation Sans, sans-serif" font-weight="bold" font-size="48.5" textLength="237" lengthAdjust="spacingAndGlyphs">NATIONAL</text>
<text transform="translate(2979 1638.8) skewX(-12)" font-family="Liberation Sans, sans-serif" font-weight="bold" font-size="46" textLength="327" lengthAdjust="spacingAndGlyphs">INSTRUMENTS</text>
<path d="M2881 1559 C2900 1554 2928 1556 2942 1567 L2975 1615 C2956 1621 2940 1629 2930 1640 L2916 1651.6 L2899 1651.6 C2903 1632 2912 1616 2924 1604 C2914 1589 2900 1572 2881 1559 Z"/>
<path d="M2944 1574 C2956 1565 2972 1560 2991 1559 C2977 1573 2969 1587 2963 1599 L2953 1585 Z"/>
</g>
</svg></body></html>
